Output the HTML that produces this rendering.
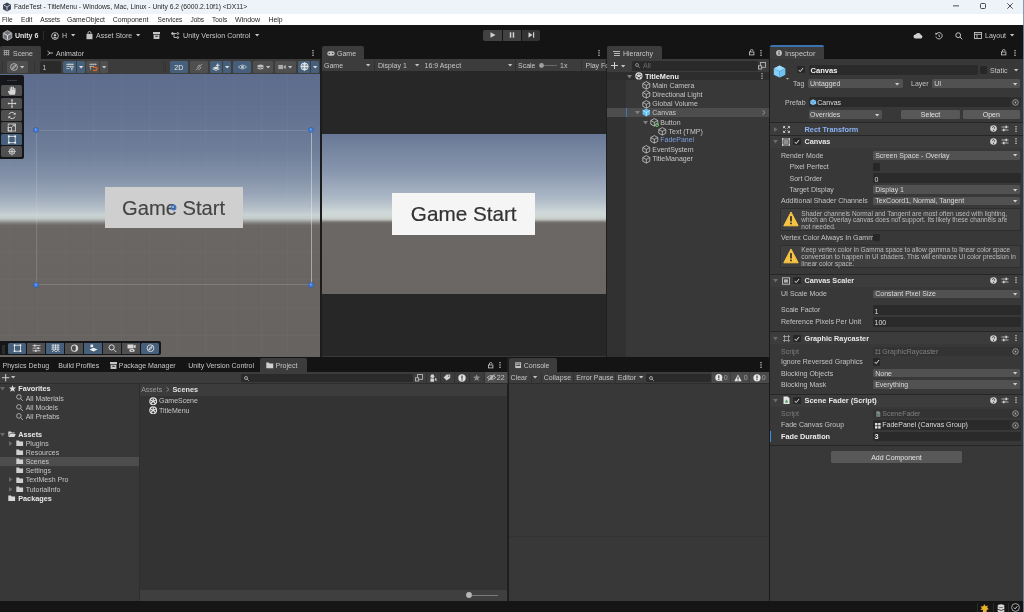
<!DOCTYPE html>
<html lang="en"><head><meta charset="utf-8"><title>Unity Editor - FadeTest</title><style>
html,body{margin:0;padding:0;}
body{width:1024px;height:612px;overflow:hidden;background:#383838;position:relative;font-family:"Liberation Sans",sans-serif;}
#app{position:absolute;left:0;top:0;width:1024px;height:612px;overflow:hidden;will-change:transform;}
.r{position:absolute;}
.s{position:absolute;overflow:visible;}
.t{position:absolute;white-space:nowrap;line-height:12px;font-size:7px;}
</style></head>
<body>
<div id="app">
<div class="r " style="left:0px;top:0px;width:1024px;height:14px;background:#eef3f9;"></div>
<div class="r " style="left:0px;top:14px;width:1024px;height:11px;background:#ffffff;"></div>
<svg class="s" style="left:1.8px;top:1.6px;" width="10" height="10" viewBox="0 0 10 10"><path d="M5 0.5L9 2.7V7.3L5 9.5L1 7.3V2.7Z" fill="#3c4656"/><path d="M5 5V8.6M5 5L1.9 3.2M5 5L8.1 3.2" stroke="#c8d0dc" stroke-width="0.9" fill="none"/></svg>
<div class="t" style="left:14px;top:1px;color:#262626;font-size:6.74px;">FadeTest - TitleMenu - Windows, Mac, Linux - Unity 6.2 (6000.2.10f1) &lt;DX11&gt;</div>
<svg class="s" style="left:953.3px;top:5px;" width="6" height="2" viewBox="0 0 6 2"><rect x="0" y="0.5" width="6" height="0.8" fill="#222"/></svg>
<svg class="s" style="left:980.2px;top:2.8px;" width="6" height="6" viewBox="0 0 6 6"><rect x="0.5" y="0.5" width="5" height="5" rx="1" fill="none" stroke="#222" stroke-width="0.8"/></svg>
<svg class="s" style="left:1006.7px;top:2.6px;" width="6" height="6" viewBox="0 0 6 6"><path d="M0.3 0.3L5.7 5.7M5.7 0.3L0.3 5.7" stroke="#222" stroke-width="0.8"/></svg>
<div class="t" style="left:2px;top:14px;color:#1f1f1f;font-size:6.6px;">File</div>
<div class="t" style="left:21px;top:14px;color:#1f1f1f;font-size:6.6px;">Edit</div>
<div class="t" style="left:40.3px;top:14px;color:#1f1f1f;font-size:6.6px;">Assets</div>
<div class="t" style="left:67px;top:14px;color:#1f1f1f;font-size:6.75px;">GameObject</div>
<div class="t" style="left:112.8px;top:14px;color:#1f1f1f;font-size:6.9px;">Component</div>
<div class="t" style="left:157.6px;top:14px;color:#1f1f1f;font-size:6.45px;">Services</div>
<div class="t" style="left:190.4px;top:14px;color:#1f1f1f;font-size:6.5px;">Jobs</div>
<div class="t" style="left:212px;top:14px;color:#1f1f1f;font-size:6.5px;">Tools</div>
<div class="t" style="left:235px;top:14px;color:#1f1f1f;font-size:7.05px;">Window</div>
<div class="t" style="left:268.5px;top:14px;color:#1f1f1f;font-size:6.85px;">Help</div>
<div class="r " style="left:0px;top:25px;width:1024px;height:34px;background:#141414;"></div>
<svg class="s" style="left:2.3px;top:30.2px;" width="11" height="11" viewBox="0 0 11 11"><path d="M5.5 0.6L9.8 3V8L5.5 10.4L1.2 8V3Z" fill="#6e7076" stroke="#c4c6cc" stroke-width="0.8"/><path d="M5.5 5.5V9.6M5.5 5.5L2 3.5M5.5 5.5L9 3.5" stroke="#e0e0e4" stroke-width="0.9" fill="none"/></svg>
<div class="t" style="left:15px;top:30px;color:#e4e4e4;font-weight:bold;">Unity 6</div>
<div class="r " style="left:43px;top:31px;width:1px;height:9px;background:#2c2c2c;"></div>
<svg class="s" style="left:51px;top:31.5px;" width="8" height="8" viewBox="0 0 8 8"><circle cx="4" cy="4" r="3.4" fill="none" stroke="#c4c4c4" stroke-width="0.9"/><circle cx="4" cy="3.2" r="1.2" fill="#c4c4c4"/><path d="M1.8 6.3a2.4 2 0 0 1 4.4 0" fill="#c4c4c4"/></svg>
<div class="t" style="left:62px;top:30px;color:#c6c6c6;">H</div>
<svg class="s" style="left:70.85px;top:34.400000000000006px;" width="4.3" height="2.6" viewBox="0 0 4.3 2.6"><path d="M0 0H4.3L2.15 2.6Z" fill="#c4c4c4"/></svg>
<svg class="s" style="left:86px;top:31px;" width="7" height="8.5" viewBox="0 0 7 8.5"><path d="M0.5 3H6.5V8.2H0.5Z" fill="#c4c4c4"/><path d="M2 3V2a1.5 1.5 0 0 1 3 0V3" fill="none" stroke="#c4c4c4" stroke-width="0.9"/></svg>
<div class="t" style="left:96px;top:30px;color:#c6c6c6;">Asset Store</div>
<svg class="s" style="left:136.35px;top:34.400000000000006px;" width="4.3" height="2.6" viewBox="0 0 4.3 2.6"><path d="M0 0H4.3L2.15 2.6Z" fill="#c4c4c4"/></svg>
<svg class="s" style="left:153px;top:32px;" width="7" height="7" viewBox="0 0 7 7"><rect x="0" y="0" width="7" height="2.2" fill="#c4c4c4"/><path d="M0.6 2.8H6.4V7H0.6Z" fill="#c4c4c4"/><rect x="2.3" y="3.8" width="2.4" height="0.9" fill="#111"/></svg>
<svg class="s" style="left:171px;top:32px;" width="9" height="7" viewBox="0 0 9 7"><g fill="none" stroke="#c4c4c4" stroke-width="0.9"><path d="M1.5 1.5H5.5M3 1.5V5.5H6"/><circle cx="1.5" cy="1.5" r="0.9" fill="#c4c4c4"/><circle cx="6.8" cy="1.5" r="0.9"/><circle cx="6.8" cy="5.5" r="0.9"/></g></svg>
<div class="t" style="left:183px;top:30px;color:#c6c6c6;font-size:7.17px;">Unity Version Control</div>
<svg class="s" style="left:255.35px;top:34.400000000000006px;" width="4.3" height="2.6" viewBox="0 0 4.3 2.6"><path d="M0 0H4.3L2.15 2.6Z" fill="#c4c4c4"/></svg>
<div class="r " style="left:483.4px;top:29.7px;width:18.2px;height:11px;background:#414141;border-radius:2px 0 0 2px"></div>
<div class="r " style="left:502.8px;top:29.7px;width:18.4px;height:11px;background:#414141;"></div>
<div class="r " style="left:522.4px;top:29.7px;width:18px;height:11px;background:#333333;border-radius:0 2px 2px 0"></div>
<svg class="s" style="left:489.6px;top:32.1px;" width="6" height="6" viewBox="0 0 6 6"><path d="M0.5 0.3L5.5 3L0.5 5.7Z" fill="#d0d0d0"/></svg>
<svg class="s" style="left:509px;top:32.1px;" width="6" height="6" viewBox="0 0 6 6"><rect x="0.8" y="0.3" width="1.5" height="5.4" fill="#d0d0d0"/><rect x="3.7" y="0.3" width="1.5" height="5.4" fill="#d0d0d0"/></svg>
<svg class="s" style="left:528px;top:32.1px;" width="7" height="6" viewBox="0 0 7 6"><path d="M0.5 0.3L4.5 3L0.5 5.7Z" fill="#d0d0d0"/><rect x="5" y="0.3" width="1.2" height="5.4" fill="#d0d0d0"/></svg>
<svg class="s" style="left:913px;top:32px;" width="10" height="7" viewBox="0 0 10 7"><path d="M2.5 6.5a2 2 0 0 1 0-4a3 3 0 0 1 5.5 0.5a1.8 1.8 0 0 1 0 3.5Z" fill="#d0d0d0"/></svg>
<svg class="s" style="left:935px;top:31.5px;" width="8" height="8" viewBox="0 0 8 8"><g fill="none" stroke="#c4c4c4" stroke-width="0.9"><path d="M1.2 2.2A3.2 3.2 0 1 1 0.9 4.6"/><path d="M4 2.3V4.2L5.3 5"/></g><path d="M0.2 0.8L2.8 1.2L0.8 3.2Z" fill="#c4c4c4"/></svg>
<svg class="s" style="left:955px;top:31.5px;" width="8" height="8" viewBox="0 0 8 8"><g fill="none" stroke="#c4c4c4" stroke-width="1"><circle cx="3.2" cy="3.2" r="2.4"/><path d="M5 5L7.3 7.3"/></g></svg>
<svg class="s" style="left:974px;top:32px;" width="8" height="7" viewBox="0 0 8 7"><g fill="none" stroke="#c4c4c4" stroke-width="0.9"><rect x="0.5" y="0.5" width="7" height="6"/><path d="M0.5 2.3H7.5M3 2.3V6.5"/></g></svg>
<div class="t" style="left:985px;top:30px;color:#c6c6c6;">Layout</div>
<svg class="s" style="left:1010.35px;top:34.400000000000006px;" width="4.3" height="2.6" viewBox="0 0 4.3 2.6"><path d="M0 0H4.3L2.15 2.6Z" fill="#c4c4c4"/></svg>
<div class="r " style="left:0px;top:59px;width:320px;height:15px;background:#3c3c3c;"></div>
<div class="r " style="left:320px;top:59px;width:2px;height:298px;background:#1c1c1c;"></div>
<div class="r " style="left:322px;top:59px;width:284px;height:12.3px;background:#3c3c3c;"></div>
<div class="r " style="left:322px;top:71.3px;width:284px;height:285.2px;background:#272727;"></div>
<div class="r " style="left:606px;top:59px;width:1.3px;height:298px;background:#1e1e1e;"></div>
<div class="r " style="left:607px;top:59px;width:161.7px;height:298px;background:#383838;"></div>
<div class="r " style="left:607px;top:59px;width:161.7px;height:12.7px;background:#3c3c3c;"></div>
<div class="r " style="left:768.7px;top:46px;width:1.2px;height:555px;background:#1a1a1a;"></div>
<div class="r " style="left:769.9px;top:59px;width:254.1px;height:542px;background:#383838;"></div>
<div class="r " style="left:0px;top:356.5px;width:769px;height:15.5px;background:#141414;"></div>
<div class="r " style="left:0px;top:372px;width:508px;height:229px;background:#383838;"></div>
<div class="r " style="left:507.3px;top:356.5px;width:1.4px;height:245px;background:#1e1e1e;"></div>
<div class="r " style="left:508.7px;top:372px;width:260px;height:229px;background:#383838;"></div>
<div class="r " style="left:0px;top:601px;width:1024px;height:11px;background:#151515;"></div>
<div class="r " style="left:0px;top:45.5px;width:40.5px;height:13.5px;background:#3c3c3c;border-radius:2px 2px 0 0"></div>
<svg class="s" style="left:3px;top:50px;" width="7" height="6" viewBox="0 0 7 6"><g fill="#a4a4a4"><rect x="0.4" y="0.1" width="6" height="0.8"/><rect x="0.4" y="2.1" width="6" height="0.8"/><rect x="0.4" y="4.1" width="6" height="0.8"/><rect x="1.1" y="0" width="0.8" height="5.6"/><rect x="3.1" y="0" width="0.8" height="5.6"/><rect x="5.1" y="0" width="0.8" height="5.6"/></g></svg>
<div class="t" style="left:13px;top:48px;color:#c6c6c6;">Scene</div>
<svg class="s" style="left:47px;top:50px;" width="6" height="6" viewBox="0 0 6 6"><g stroke="#c4c4c4" stroke-width="0.9" fill="none"><path d="M0.5 1L3 3L0.5 5M3 3H6"/></g></svg>
<div class="t" style="left:56px;top:48px;color:#c6c6c6;">Animator</div>
<svg class="s" style="left:311.7px;top:49.5px;" width="2" height="6" viewBox="0 0 2 6"><g fill="#c4c4c4"><rect x="0.35" y="0" width="1.3" height="1.3"/><rect x="0.35" y="2.35" width="1.3" height="1.3"/><rect x="0.35" y="4.7" width="1.3" height="1.3"/></g></svg>
<div class="r " style="left:322px;top:45.5px;width:42px;height:13.5px;background:#3c3c3c;border-radius:2px 2px 0 0"></div>
<svg class="s" style="left:327px;top:50.5px;" width="8" height="5" viewBox="0 0 8 5"><rect x="0.3" y="0.3" width="7.4" height="4.4" rx="2.2" fill="#c4c4c4"/><circle cx="2.3" cy="2.5" r="0.8" fill="#3c3c3c"/><circle cx="5.7" cy="2.5" r="0.8" fill="#3c3c3c"/></svg>
<div class="t" style="left:337px;top:48px;color:#c6c6c6;">Game</div>
<svg class="s" style="left:597.5px;top:49.5px;" width="2" height="6" viewBox="0 0 2 6"><g fill="#c4c4c4"><rect x="0.35" y="0" width="1.3" height="1.3"/><rect x="0.35" y="2.35" width="1.3" height="1.3"/><rect x="0.35" y="4.7" width="1.3" height="1.3"/></g></svg>
<div class="r " style="left:607px;top:45.5px;width:55px;height:13.5px;background:#3c3c3c;border-radius:2px 2px 0 0"></div>
<svg class="s" style="left:613px;top:50.5px;" width="7" height="5" viewBox="0 0 7 5"><g fill="#c4c4c4"><rect x="0" y="0" width="7" height="0.9"/><rect x="1" y="2" width="6" height="0.9"/><rect x="1" y="4" width="6" height="0.9"/></g></svg>
<div class="t" style="left:623px;top:48px;color:#c6c6c6;">Hierarchy</div>
<svg class="s" style="left:748.8px;top:49.199999999999996px;" width="5.4" height="6.4" viewBox="0 0 5.4 6.4"><g fill="none" stroke="#c4c4c4" stroke-width="0.85"><rect x="0.5" y="3" width="4.4" height="2.9"/><path d="M1.4 3V1.9a1.35 1.35 0 0 1 2.7 0"/></g></svg>
<svg class="s" style="left:760.1px;top:49.5px;" width="2" height="6" viewBox="0 0 2 6"><g fill="#c4c4c4"><rect x="0.35" y="0" width="1.3" height="1.3"/><rect x="0.35" y="2.35" width="1.3" height="1.3"/><rect x="0.35" y="4.7" width="1.3" height="1.3"/></g></svg>
<div class="r " style="left:769.9px;top:45.5px;width:54.2px;height:13.5px;background:#3c3c3c;border-radius:2px 2px 0 0"></div>
<div class="r " style="left:769.9px;top:45.4px;width:54.2px;height:1.4px;background:#3d72b0;border-radius:2px 2px 0 0"></div>
<svg class="s" style="left:776px;top:50px;" width="6" height="6" viewBox="0 0 6 6"><circle cx="3" cy="3" r="2.9" fill="#c4c4c4"/><rect x="2.5" y="2.6" width="1" height="2.2" fill="#3c3c3c"/><rect x="2.5" y="1.2" width="1" height="1" fill="#3c3c3c"/></svg>
<div class="t" style="left:785px;top:48px;color:#c6c6c6;font-size:7.4px;">Inspector</div>
<svg class="s" style="left:1001.3px;top:49.199999999999996px;" width="5.4" height="6.4" viewBox="0 0 5.4 6.4"><g fill="none" stroke="#c4c4c4" stroke-width="0.85"><rect x="0.5" y="3" width="4.4" height="2.9"/><path d="M1.4 3V1.9a1.35 1.35 0 0 1 2.7 0"/></g></svg>
<svg class="s" style="left:1014px;top:49.5px;" width="2" height="6" viewBox="0 0 2 6"><g fill="#c4c4c4"><rect x="0.35" y="0" width="1.3" height="1.3"/><rect x="0.35" y="2.35" width="1.3" height="1.3"/><rect x="0.35" y="4.7" width="1.3" height="1.3"/></g></svg>
<div class="r " style="left:2px;top:61px;width:1px;height:11px;background:#343434;"></div>
<div class="r " style="left:7px;top:60.5px;width:21px;height:12px;background:#4f4f4f;border-radius:1.5px"></div>
<svg class="s" style="left:10px;top:62.5px;" width="8" height="8" viewBox="0 0 8 8"><g fill="none" stroke="#c8c8c8" stroke-width="0.8"><circle cx="4" cy="4" r="3.4"/><path d="M5.8 2.2L3.2 3.4L2.4 5.8L4.8 4.6Z"/></g></svg>
<svg class="s" style="left:20.35px;top:65.5px;" width="4.3" height="2.6" viewBox="0 0 4.3 2.6"><path d="M0 0H4.3L2.15 2.6Z" fill="#c4c4c4"/></svg>
<div class="r " style="left:33.6px;top:61px;width:1px;height:11px;background:#343434;"></div>
<div class="r " style="left:40px;top:60.5px;width:21px;height:12px;background:#2a2a2a;border-radius:1.5px"></div>
<div class="t" style="left:42.5px;top:62px;color:#c6c6c6;">1</div>
<div class="r " style="left:63.3px;top:60.5px;width:13.2px;height:12px;background:#46607c;border-radius:1.5px 0 0 1.5px"></div>
<div class="r " style="left:77px;top:60.5px;width:8px;height:12px;background:#46607c;border-radius:0 1.5px 1.5px 0"></div>
<svg class="s" style="left:66px;top:63px;" width="8" height="7.5" viewBox="0 0 8 7.5"><g stroke="#dcdcdc" stroke-width="0.75" fill="none"><path d="M0.3 1.4H7.7M0.3 3.5H7.7M0.3 5.6H3.6M2.2 0.4V2.4M4.2 0.4V2.4M6.2 0.4V2.4"/><path d="M4.4 4L5.9 5.7V7.4M7.5 4L5.9 5.7" stroke-width="0.95"/></g></svg>
<svg class="s" style="left:78.85px;top:65.5px;" width="4.3" height="2.6" viewBox="0 0 4.3 2.6"><path d="M0 0H4.3L2.15 2.6Z" fill="#e0e0e0"/></svg>
<div class="r " style="left:86.2px;top:60.5px;width:13.2px;height:12px;background:#4f4f4f;border-radius:1.5px 0 0 1.5px"></div>
<div class="r " style="left:99.9px;top:60.5px;width:7.7px;height:12px;background:#4f4f4f;border-radius:0 1.5px 1.5px 0"></div>
<svg class="s" style="left:89px;top:63px;" width="9" height="7.8" viewBox="0 0 9 7.8"><g stroke="#cccccc" stroke-width="0.7" fill="none"><path d="M0.3 1.4H7.7M0.3 3.5H5M2.2 0.4V2.4M4.2 0.4V2.4M6.2 0.4V2.4M1.6 3.5V6.8"/></g><path d="M4 4.4H6.6a1.5 1.5 0 0 1 0 3H4" fill="none" stroke="#e8662a" stroke-width="1.2"/></svg>
<svg class="s" style="left:101.64999999999999px;top:65.5px;" width="4.3" height="2.6" viewBox="0 0 4.3 2.6"><path d="M0 0H4.3L2.15 2.6Z" fill="#c4c4c4"/></svg>
<div class="r " style="left:163px;top:61px;width:1px;height:11px;background:#343434;"></div>
<div class="r " style="left:165px;top:61px;width:1px;height:11px;background:#343434;"></div>
<div class="r " style="left:169.6px;top:60.5px;width:18.4px;height:12px;background:#46607c;border-radius:1.5px"></div>
<div class="t" style="left:169.6px;top:62px;color:#ececec;width:18.4px;text-align:center;">2D</div>
<div class="r " style="left:189.6px;top:60.5px;width:18.6px;height:12px;background:#4f4f4f;border-radius:1.5px"></div>
<svg class="s" style="left:194.5px;top:62.5px;" width="8" height="8" viewBox="0 0 8 8"><g stroke="#b4b4b4" stroke-width="0.8" fill="none"><path d="M1 7.2L7.2 1"/><path d="M2.6 4.6a2 2 0 0 1 2.6-2.2"/><path d="M5.6 3.8a2 2 0 0 1 -2.2 2.6"/></g></svg>
<div class="r " style="left:209.6px;top:60.5px;width:12.7px;height:12px;background:#46607c;border-radius:1.5px 0 0 1.5px"></div>
<div class="r " style="left:222.8px;top:60.5px;width:8.2px;height:12px;background:#46607c;border-radius:0 1.5px 1.5px 0"></div>
<svg class="s" style="left:212px;top:62.5px;" width="8" height="8" viewBox="0 0 8 8"><g fill="#e0e0e0"><path d="M0.5 5L4 3.5L7.5 5L4 6.5Z"/><path d="M0.5 6.3L4 7.8L7.5 6.3V5.6L4 7L0.5 5.6Z"/><path d="M5.2 0.5H6.2V1.8H7.5V2.8H6.2V4H5.2V2.8H4V1.8H5.2Z"/></g></svg>
<svg class="s" style="left:224.75px;top:65.5px;" width="4.3" height="2.6" viewBox="0 0 4.3 2.6"><path d="M0 0H4.3L2.15 2.6Z" fill="#e0e0e0"/></svg>
<div class="r " style="left:232.8px;top:60.5px;width:18.4px;height:12px;background:#46607c;border-radius:1.5px"></div>
<svg class="s" style="left:237.5px;top:63.7px;" width="9" height="6" viewBox="0 0 9 6"><path d="M0.4 3Q4.5 -0.8 8.6 3Q4.5 6.8 0.4 3Z" fill="none" stroke="#c0cad8" stroke-width="0.8"/><circle cx="4.5" cy="3" r="1.3" fill="#c8d0dc"/></svg>
<div class="r " style="left:253px;top:60.5px;width:20.4px;height:12px;background:#4f4f4f;border-radius:1.5px"></div>
<svg class="s" style="left:257px;top:63.8px;" width="7" height="6" viewBox="0 0 7 6"><g fill="#bcbcbc"><ellipse cx="3.5" cy="1.9" rx="3.1" ry="1.5"/><path d="M0.4 3.3Q3.5 5.6 6.6 3.3V4.5Q3.5 6.6 0.4 4.5Z"/></g></svg>
<svg class="s" style="left:265.85px;top:65.5px;" width="4.3" height="2.6" viewBox="0 0 4.3 2.6"><path d="M0 0H4.3L2.15 2.6Z" fill="#c4c4c4"/></svg>
<div class="r " style="left:275px;top:60.5px;width:21.2px;height:12px;background:#4f4f4f;border-radius:1.5px"></div>
<svg class="s" style="left:278.3px;top:63.8px;" width="9" height="6" viewBox="0 0 9 6"><g fill="#aaaaaa"><rect x="0.3" y="0.9" width="4.8" height="4.2"/><path d="M5.7 2.2L7.9 0.9V5.1L5.7 3.8Z"/></g></svg>
<svg class="s" style="left:288.35px;top:65.5px;" width="4.3" height="2.6" viewBox="0 0 4.3 2.6"><path d="M0 0H4.3L2.15 2.6Z" fill="#c4c4c4"/></svg>
<div class="r " style="left:297.6px;top:60.5px;width:12.8px;height:12px;background:#46607c;border-radius:1.5px 0 0 1.5px"></div>
<div class="r " style="left:310.8px;top:60.5px;width:8.2px;height:12px;background:#46607c;border-radius:0 1.5px 1.5px 0"></div>
<svg class="s" style="left:299.5px;top:62px;" width="9" height="9" viewBox="0 0 9 9"><g fill="none" stroke="#ececec" stroke-width="0.9"><circle cx="4.5" cy="4.5" r="3.6"/><path d="M0.9 4.5H8.1M4.5 0.9V8.1"/><ellipse cx="4.5" cy="4.5" rx="1.6" ry="3.6"/></g></svg>
<svg class="s" style="left:312.75px;top:65.5px;" width="4.3" height="2.6" viewBox="0 0 4.3 2.6"><path d="M0 0H4.3L2.15 2.6Z" fill="#e0e0e0"/></svg>
<div class="r" style="left:0;top:74px;width:320px;height:283px;overflow:hidden;background:linear-gradient(to bottom,#5e6d8e 0px,#62718f 37px,#6e7d98 76px,#8290a8 102px,#9aa7b8 121px,#b4bfc8 134px,#c8d2d4 141px,#c2cac8 144.5px,#a0a4a2 147px,#7c7a78 149.5px,#6c6966 151.5px,#6a6663 155px,#676360 283px)">
<div class="r" style="left:8.5px;top:0;width:1px;height:281px;background:rgba(255,255,255,0.025)"></div>
<div class="r" style="left:36.5px;top:0;width:1px;height:281px;background:rgba(255,255,255,0.025)"></div>
<div class="r" style="left:64.5px;top:0;width:1px;height:281px;background:rgba(255,255,255,0.025)"></div>
<div class="r" style="left:92.5px;top:0;width:1px;height:281px;background:rgba(255,255,255,0.025)"></div>
<div class="r" style="left:120.5px;top:0;width:1px;height:281px;background:rgba(255,255,255,0.025)"></div>
<div class="r" style="left:148.5px;top:0;width:1px;height:281px;background:rgba(255,255,255,0.025)"></div>
<div class="r" style="left:176.5px;top:0;width:1px;height:281px;background:rgba(255,255,255,0.025)"></div>
<div class="r" style="left:204.5px;top:0;width:1px;height:281px;background:rgba(255,255,255,0.025)"></div>
<div class="r" style="left:232.5px;top:0;width:1px;height:281px;background:rgba(255,255,255,0.025)"></div>
<div class="r" style="left:260.5px;top:0;width:1px;height:281px;background:rgba(255,255,255,0.025)"></div>
<div class="r" style="left:286.5px;top:0;width:1px;height:281px;background:rgba(255,255,255,0.025)"></div>
<div class="r" style="left:0;top:37px;width:320px;height:1px;background:rgba(255,255,255,0.02)"></div>
<div class="r" style="left:0;top:65px;width:320px;height:1px;background:rgba(255,255,255,0.02)"></div>
<div class="r" style="left:0;top:93px;width:320px;height:1px;background:rgba(255,255,255,0.02)"></div>
<div class="r" style="left:0;top:121px;width:320px;height:1px;background:rgba(255,255,255,0.02)"></div>
<div class="r" style="left:0;top:149px;width:320px;height:1px;background:rgba(255,255,255,0.02)"></div>
<div class="r" style="left:0;top:177px;width:320px;height:1px;background:rgba(255,255,255,0.02)"></div>
<div class="r" style="left:0;top:205px;width:320px;height:1px;background:rgba(255,255,255,0.02)"></div>
<div class="r" style="left:0;top:233px;width:320px;height:1px;background:rgba(255,255,255,0.02)"></div>
<div class="r" style="left:0;top:261px;width:320px;height:1px;background:rgba(255,255,255,0.02)"></div>
</div>
<div class="r " style="left:36px;top:129.8px;width:276px;height:1px;background:rgba(220,220,220,0.16);"></div>
<div class="r " style="left:36px;top:284.2px;width:276px;height:1px;background:rgba(220,220,220,0.22);"></div>
<div class="r " style="left:35.8px;top:130px;width:1px;height:154.5px;background:rgba(220,220,220,0.18);"></div>
<div class="r " style="left:310.8px;top:130px;width:1px;height:154.5px;background:rgba(235,235,235,0.5);"></div>
<div class="r " style="left:104.6px;top:187px;width:138px;height:40.6px;background:#cfcfcf;"></div>
<div class="t" style="left:104.6px;top:202px;color:#454545;font-size:20.15px;width:138px;text-align:center;line-height:24px;top:195.5px;-webkit-text-stroke:0.15px #454545;">Game Start</div>
<svg class="s" style="left:33.2px;top:127.19999999999999px;" width="6" height="6" viewBox="0 0 6 6"><circle cx="3" cy="3" r="2.8" fill="#3a5f9e"/><circle cx="3" cy="3" r="2.2" fill="#3b7be0"/><circle cx="2.8" cy="2.5" r="1" fill="#6ea0f0"/></svg>
<svg class="s" style="left:308.3px;top:127.19999999999999px;" width="6" height="6" viewBox="0 0 6 6"><circle cx="3" cy="3" r="2.8" fill="#3a5f9e"/><circle cx="3" cy="3" r="2.2" fill="#3b7be0"/><circle cx="2.8" cy="2.5" r="1" fill="#6ea0f0"/></svg>
<svg class="s" style="left:33.2px;top:281.8px;" width="6" height="6" viewBox="0 0 6 6"><circle cx="3" cy="3" r="2.8" fill="#3a5f9e"/><circle cx="3" cy="3" r="2.2" fill="#3b7be0"/><circle cx="2.8" cy="2.5" r="1" fill="#6ea0f0"/></svg>
<svg class="s" style="left:308.3px;top:281.8px;" width="6" height="6" viewBox="0 0 6 6"><circle cx="3" cy="3" r="2.8" fill="#3a5f9e"/><circle cx="3" cy="3" r="2.2" fill="#3b7be0"/><circle cx="2.8" cy="2.5" r="1" fill="#6ea0f0"/></svg>
<svg class="s" style="left:169.8px;top:203.8px;" width="7" height="7" viewBox="0 0 7 7"><circle cx="3.5" cy="3.5" r="2.3" fill="rgba(90,120,170,0.45)" stroke="#3a78d8" stroke-width="1.3"/><circle cx="3.1" cy="3.1" r="0.7" fill="#c8dcf8"/></svg>
<div class="r " style="left:0px;top:75.4px;width:24px;height:83.5px;background:#14161a;border-radius:0 2px 2px 0"></div>
<div class="r " style="left:7px;top:79.6px;width:10px;height:1.4px;background:#34383e;"></div>
<div class="r " style="left:1px;top:85px;width:21px;height:11.2px;background:#4f4f4f;border-radius:1.5px"></div>
<div class="r " style="left:1px;top:97.6px;width:21px;height:11.2px;background:#4f4f4f;border-radius:1.5px"></div>
<div class="r " style="left:1px;top:109.7px;width:21px;height:11.2px;background:#4f4f4f;border-radius:1.5px"></div>
<div class="r " style="left:1px;top:121.9px;width:21px;height:11.2px;background:#4f4f4f;border-radius:1.5px"></div>
<div class="r " style="left:1px;top:133.9px;width:21px;height:11.2px;background:#46607c;border-radius:1.5px"></div>
<div class="r " style="left:1px;top:146px;width:21px;height:11.2px;background:#4f4f4f;border-radius:1.5px"></div>
<svg class="s" style="left:7px;top:86px;" width="10" height="9" viewBox="0 0 10 9"><path d="M2.6 8.8L0.8 5.4L1.7 4.7L2.7 5.6V1.5Q3.2 1 3.7 1.5V3.8H4.1V0.7Q4.7 0.2 5.3 0.7V3.8H5.7V1.1Q6.3 0.6 6.9 1.1V4H7.3V2.2Q7.9 1.8 8.5 2.3V6.4L7.8 8.8Z" fill="#d8d8d8"/></svg>
<svg class="s" style="left:7px;top:98.7px;" width="10" height="9" viewBox="0 0 10 9"><g stroke="#d8d8d8" stroke-width="0.9" fill="none"><path d="M5 0.8V8.2M1.3 4.5H8.7"/></g><g fill="#d8d8d8"><path d="M5 0L6.3 1.6H3.7Z"/><path d="M5 9L6.3 7.4H3.7Z"/><path d="M0.5 4.5L2.1 3.2V5.8Z"/><path d="M9.5 4.5L7.9 3.2V5.8Z"/></g></svg>
<svg class="s" style="left:7px;top:110.8px;" width="10" height="9" viewBox="0 0 10 9"><g stroke="#d8d8d8" stroke-width="0.9" fill="none"><path d="M7.8 3A3.2 3.2 0 0 0 2 3.4"/><path d="M2.2 6A3.2 3.2 0 0 0 8 5.6"/></g><g fill="#d8d8d8"><path d="M8.6 1.4V3.8H6.2Z"/><path d="M1.4 7.6V5.2H3.8Z"/></g></svg>
<svg class="s" style="left:7px;top:122.9px;" width="10" height="9" viewBox="0 0 10 9"><g stroke="#d8d8d8" stroke-width="0.8" fill="none"><rect x="1.2" y="1" width="7.4" height="7"/><rect x="1.2" y="4.6" width="3.4" height="3.4"/><path d="M4.8 4.4L7.4 1.8M5.6 1.8H7.4V3.6"/></g></svg>
<svg class="s" style="left:7px;top:135px;" width="10" height="9" viewBox="0 0 10 9"><rect x="1.8" y="1.3" width="6.4" height="6.4" fill="none" stroke="#f0f0f0" stroke-width="0.8"/><g fill="#f0f0f0"><rect x="0.9" y="0.4" width="1.8" height="1.8"/><rect x="7.3" y="0.4" width="1.8" height="1.8"/><rect x="0.9" y="6.8" width="1.8" height="1.8"/><rect x="7.3" y="6.8" width="1.8" height="1.8"/></g></svg>
<svg class="s" style="left:7px;top:147.1px;" width="10" height="9" viewBox="0 0 10 9"><g stroke="#d8d8d8" stroke-width="0.7" fill="none"><circle cx="5" cy="4.5" r="2.8"/><path d="M5 0.6V8.4M1.1 4.5H8.9M2.4 1.9L7.6 7.1M7.6 1.9L2.4 7.1"/></g></svg>
<div class="r " style="left:0px;top:341.2px;width:160.5px;height:14.3px;background:#14161a;border-radius:0 2px 2px 0"></div>
<div class="r " style="left:2px;top:344.5px;width:3px;height:9px;background:#2c2c2c;"></div>
<div class="r " style="left:8.2px;top:342.9px;width:18.2px;height:11px;background:#46607c;border-radius:1.5px"></div>
<div class="r " style="left:27.2px;top:342.9px;width:18.2px;height:11px;background:#4f4f4f;"></div>
<div class="r " style="left:46.2px;top:342.9px;width:18.2px;height:11px;background:#46607c;"></div>
<div class="r " style="left:65.2px;top:342.9px;width:18.2px;height:11px;background:#4f4f4f;"></div>
<div class="r " style="left:84.2px;top:342.9px;width:18.2px;height:11px;background:#46607c;"></div>
<div class="r " style="left:103.2px;top:342.9px;width:18.2px;height:11px;background:#4f4f4f;"></div>
<div class="r " style="left:122.2px;top:342.9px;width:18.2px;height:11px;background:#4f4f4f;"></div>
<div class="r " style="left:141.2px;top:342.9px;width:18.2px;height:11px;background:#46607c;border-radius:1.5px"></div>
<svg class="s" style="left:13px;top:344.3px;" width="9" height="8.4" viewBox="0 0 9 8.4"><rect x="1.5" y="1.2" width="6" height="6" fill="none" stroke="#f0f0f0" stroke-width="0.8"/><g fill="#f0f0f0"><rect x="0.7" y="0.4" width="1.6" height="1.6"/><rect x="6.7" y="0.4" width="1.6" height="1.6"/><rect x="0.7" y="6.4" width="1.6" height="1.6"/><rect x="6.7" y="6.4" width="1.6" height="1.6"/></g></svg>
<svg class="s" style="left:32px;top:344.3px;" width="9" height="8.4" viewBox="0 0 9 8.4"><g stroke="#d8d8d8" stroke-width="0.8" fill="none"><path d="M0.5 1.6H8.5M0.5 4.2H8.5M0.5 6.8H8.5"/></g><g fill="#d8d8d8"><rect x="2" y="0.6" width="1.6" height="2"/><rect x="5.4" y="3.2" width="1.6" height="2"/><rect x="3" y="5.8" width="1.6" height="2"/></g></svg>
<svg class="s" style="left:51px;top:344.3px;" width="9" height="8.4" viewBox="0 0 9 8.4"><g stroke="#f0f0f0" stroke-width="0.7" fill="none"><path d="M0.5 1.2H8.5M0.5 3.2H8.5M0.5 5.2H8.5M2 0.3V6M4.5 0.3V6M7 0.3V6M1 8L3 6.2L5 8L7 6.2L8.5 8"/></g></svg>
<svg class="s" style="left:70px;top:344.3px;" width="9" height="8.4" viewBox="0 0 9 8.4"><circle cx="4.5" cy="4.2" r="3.3" fill="none" stroke="#d8d8d8" stroke-width="1"/><path d="M4.5 0.9A3.3 3.3 0 0 1 4.5 7.5A4.5 4.5 0 0 0 4.5 0.9Z" fill="#d8d8d8"/></svg>
<svg class="s" style="left:89px;top:344.3px;" width="9" height="8.4" viewBox="0 0 9 8.4"><g fill="#f0f0f0"><path d="M0.5 5.6L4.5 3.8L8.5 5.6L4.5 7.6Z"/><rect x="1.5" y="0.6" width="2.6" height="2.6"/></g></svg>
<svg class="s" style="left:108px;top:344.3px;" width="9" height="8.4" viewBox="0 0 9 8.4"><g fill="none" stroke="#d8d8d8" stroke-width="1"><circle cx="3.6" cy="3.4" r="2.6"/><path d="M5.6 5.4L8.2 8"/></g></svg>
<svg class="s" style="left:127px;top:344.3px;" width="9" height="8.4" viewBox="0 0 9 8.4"><g fill="#d8d8d8"><rect x="0.5" y="0.5" width="6" height="4"/><path d="M6.8 1.5L8.6 0.7V4.3L6.8 3.5Z"/><ellipse cx="5" cy="6.6" rx="2.8" ry="1.5"/></g><circle cx="5" cy="6.6" r="0.8" fill="#4f4f4f"/></svg>
<svg class="s" style="left:146px;top:344.3px;" width="9" height="8.4" viewBox="0 0 9 8.4"><g fill="none" stroke="#f0f0f0" stroke-width="0.8"><circle cx="4.5" cy="4.2" r="3.4"/><path d="M6.2 2.4L3.8 3.6L2.8 6L5.2 4.8Z"/></g></svg>
<div class="t" style="left:324px;top:60px;color:#c6c6c6;">Game</div>
<svg class="s" style="left:366.15000000000003px;top:64.3px;" width="4.3" height="2.6" viewBox="0 0 4.3 2.6"><path d="M0 0H4.3L2.15 2.6Z" fill="#c4c4c4"/></svg>
<div class="r " style="left:374px;top:59.5px;width:1px;height:11.5px;background:#303030;"></div>
<div class="t" style="left:378px;top:60px;color:#c6c6c6;">Display 1</div>
<svg class="s" style="left:415.35px;top:64.3px;" width="4.3" height="2.6" viewBox="0 0 4.3 2.6"><path d="M0 0H4.3L2.15 2.6Z" fill="#c4c4c4"/></svg>
<div class="t" style="left:424.5px;top:60px;color:#c6c6c6;">16:9 Aspect</div>
<svg class="s" style="left:507.85px;top:64.3px;" width="4.3" height="2.6" viewBox="0 0 4.3 2.6"><path d="M0 0H4.3L2.15 2.6Z" fill="#c4c4c4"/></svg>
<div class="r " style="left:514.5px;top:59.5px;width:1px;height:11.5px;background:#303030;"></div>
<div class="t" style="left:518px;top:60px;color:#c6c6c6;">Scale</div>
<div class="r " style="left:541px;top:65.1px;width:16px;height:0.8px;background:#6a6a6a;"></div>
<svg class="s" style="left:538.5px;top:63px;" width="5" height="5" viewBox="0 0 5 5"><circle cx="2.5" cy="2.5" r="2.4" fill="#a0a0a0"/></svg>
<div class="t" style="left:560px;top:60px;color:#c6c6c6;">1x</div>
<div class="r " style="left:581px;top:59.5px;width:1px;height:11.5px;background:#303030;"></div>
<div class="t" style="left:585.5px;top:60px;color:#c6c6c6;width:21px;overflow:hidden;white-space:nowrap;">Play Focused</div>
<div class="r" style="left:322px;top:133.6px;width:284px;height:160.8px;background:linear-gradient(to bottom,#687896 0px,#77869f 16px,#8593ab 35px,#a0adbf 55px,#aab7c5 63px,#b8c3cc 69.5px,#c9d3d6 76px,#d0d8d8 80px,#cdd4d2 83px,#c2c8c2 85.2px,#9c9e9b 86.8px,#74716e 88.2px,#6b6764 90px,#6a6663 160px)"></div>
<div class="r " style="left:392.2px;top:193px;width:143.1px;height:41.8px;background:#f5f5f5;"></div>
<div class="t" style="left:392.2px;top:209px;color:#333333;font-size:20.7px;width:143.1px;text-align:center;line-height:24px;top:202px;-webkit-text-stroke:0.2px #333333;">Game Start</div>
<div class="r " style="left:607px;top:72px;width:18.7px;height:284.5px;background:#313131;"></div>
<div class="r " style="left:607px;top:71.6px;width:161.7px;height:8.5px;background:#2d2d2d;"></div>
<svg class="s" style="left:611px;top:61.7px;" width="7" height="7" viewBox="0 0 7 7"><path d="M3.5 0V7M0 3.5H7" stroke="#d0d0d0" stroke-width="1"/></svg>
<svg class="s" style="left:620.85px;top:64.5px;" width="4.3" height="2.6" viewBox="0 0 4.3 2.6"><path d="M0 0H4.3L2.15 2.6Z" fill="#c4c4c4"/></svg>
<div class="r " style="left:632px;top:60.5px;width:126px;height:10px;background:#2a2a2a;border-radius:1.5px"></div>
<svg class="s" style="left:635px;top:63.3px;" width="5" height="5" viewBox="0 0 5 5"><g fill="none" stroke="#9a9a9a" stroke-width="0.8"><circle cx="2" cy="2" r="1.5"/><path d="M3.2 3.2L4.8 4.8"/></g></svg>
<div class="t" style="left:643px;top:60px;color:#6e6e6e;">All</div>
<svg class="s" style="left:758px;top:61.5px;" width="8" height="8" viewBox="0 0 8 8"><g fill="none" stroke="#c4c4c4" stroke-width="0.8"><rect x="2.6" y="0.5" width="4.8" height="4.8"/><rect x="0.5" y="3.8" width="3.2" height="3.2" fill="#3c3c3c"/></g></svg>
<div class="r " style="left:607px;top:108.2px;width:161.7px;height:9px;background:#4d4d4d;"></div>
<div class="r " style="left:626px;top:108.2px;width:1px;height:9px;background:#3a79bb;"></div>
<svg class="s" style="left:627.0px;top:74.6px;" width="5" height="3.5" viewBox="0 0 5 3.5"><path d="M0 0H5L2.5 3.5Z" fill="#808080"/></svg>
<svg class="s" style="left:635px;top:72.19999999999999px;" width="7.8" height="7.8" viewBox="0 0 8.4 8.4"><circle cx="4.2" cy="4.2" r="3.9" fill="#e0e0e0"/><g fill="#2b2b2b"><path d="M3.6 3.5L1.9 2.6L3.6 1.3Z"/><path d="M4.8 3.5L6.5 2.6L4.8 1.3Z"/><path d="M1.3 3.6L3 4.5L1.6 6Z"/><path d="M7.1 3.6L5.4 4.5L6.8 6Z"/><path d="M4.2 5.2L5.8 6.3L4.2 7.4L2.6 6.3Z"/></g></svg>
<div class="t" style="left:645px;top:71px;color:#eeeeee;font-size:7.3px;font-weight:bold;">TitleMenu</div>
<svg class="s" style="left:760.5px;top:73.1px;" width="2" height="6" viewBox="0 0 2 6"><g fill="#b0b0b0"><rect x="0.35" y="0" width="1.3" height="1.3"/><rect x="0.35" y="2.35" width="1.3" height="1.3"/><rect x="0.35" y="4.7" width="1.3" height="1.3"/></g></svg>
<svg class="s" style="left:641.7px;top:81.2px;" width="8.6" height="8.6" viewBox="0 0 8.6 8.6"><g fill="none" stroke="#c8c8c8" stroke-width="0.8"><path d="M4.3 0.6L7.8 2.5V6.3L4.3 8.1L0.8 6.3V2.5Z"/><path d="M4.3 4.4V8.1M4.3 4.4L0.8 2.5M4.3 4.4L7.8 2.5"/></g></svg>
<div class="t" style="left:652.3px;top:80px;color:#c6c6c6;">Main Camera</div>
<svg class="s" style="left:641.7px;top:90.2px;" width="8.6" height="8.6" viewBox="0 0 8.6 8.6"><g fill="none" stroke="#c8c8c8" stroke-width="0.8"><path d="M4.3 0.6L7.8 2.5V6.3L4.3 8.1L0.8 6.3V2.5Z"/><path d="M4.3 4.4V8.1M4.3 4.4L0.8 2.5M4.3 4.4L7.8 2.5"/></g></svg>
<div class="t" style="left:652.3px;top:89px;color:#c6c6c6;">Directional Light</div>
<svg class="s" style="left:641.7px;top:99.5px;" width="8.6" height="8.6" viewBox="0 0 8.6 8.6"><g fill="none" stroke="#c8c8c8" stroke-width="0.8"><path d="M4.3 0.6L7.8 2.5V6.3L4.3 8.1L0.8 6.3V2.5Z"/><path d="M4.3 4.4V8.1M4.3 4.4L0.8 2.5M4.3 4.4L7.8 2.5"/></g></svg>
<div class="t" style="left:652.3px;top:98px;color:#c6c6c6;">Global Volume</div>
<svg class="s" style="left:635.0px;top:110.9px;" width="5" height="3.5" viewBox="0 0 5 3.5"><path d="M0 0H5L2.5 3.5Z" fill="#808080"/></svg>
<svg class="s" style="left:641.7px;top:108.10000000000001px;" width="8.6" height="8.6" viewBox="0 0 8.6 8.6"><path d="M4.3 0.4L8 2.4V6.4L4.3 8.3L0.6 6.4V2.4Z" fill="#62bcf0"/><path d="M4.3 4.4V8.3M4.3 4.4L0.6 2.4M4.3 4.4L8 2.4" stroke="#d8f2ff" stroke-width="0.7" fill="none"/></svg>
<div class="t" style="left:652.3px;top:107px;color:#c6c6c6;">Canvas</div>
<svg class="s" style="left:762px;top:109.9px;" width="3.5" height="5" viewBox="0 0 3.5 5"><path d="M0.5 0.3L3 2.5L0.5 4.7" fill="none" stroke="#a8a8a8" stroke-width="0.8"/></svg>
<svg class="s" style="left:642.8px;top:120.8px;" width="5" height="3.5" viewBox="0 0 5 3.5"><path d="M0 0H5L2.5 3.5Z" fill="#808080"/></svg>
<svg class="s" style="left:650px;top:118.0px;" width="8.6" height="8.6" viewBox="0 0 8.6 8.6"><g fill="none" stroke="#c8c8c8" stroke-width="0.8"><path d="M4.3 0.6L7.8 2.5V6.3L4.3 8.1L0.8 6.3V2.5Z"/><path d="M4.3 4.4V8.1M4.3 4.4L0.8 2.5M4.3 4.4L7.8 2.5"/></g></svg>
<div class="t" style="left:660.3px;top:117px;color:#c6c6c6;">Button</div>
<svg class="s" style="left:654.5px;top:122.5px;" width="4" height="4" viewBox="0 0 4 4"><circle cx="2" cy="2" r="1.6" fill="none" stroke="#5ec85e" stroke-width="0.9"/></svg>
<svg class="s" style="left:658px;top:127.10000000000001px;" width="8.6" height="8.6" viewBox="0 0 8.6 8.6"><g fill="none" stroke="#c8c8c8" stroke-width="0.8"><path d="M4.3 0.6L7.8 2.5V6.3L4.3 8.1L0.8 6.3V2.5Z"/><path d="M4.3 4.4V8.1M4.3 4.4L0.8 2.5M4.3 4.4L7.8 2.5"/></g></svg>
<div class="t" style="left:668.5px;top:126px;color:#c6c6c6;">Text (TMP)</div>
<svg class="s" style="left:650px;top:135.39999999999998px;" width="8.6" height="8.6" viewBox="0 0 8.6 8.6"><g fill="none" stroke="#c8c8c8" stroke-width="0.8"><path d="M4.3 0.6L7.8 2.5V6.3L4.3 8.1L0.8 6.3V2.5Z"/><path d="M4.3 4.4V8.1M4.3 4.4L0.8 2.5M4.3 4.4L7.8 2.5"/></g></svg>
<div class="t" style="left:660.3px;top:134px;color:#7b9ede;">FadePanel</div>
<svg class="s" style="left:641.7px;top:145.39999999999998px;" width="8.6" height="8.6" viewBox="0 0 8.6 8.6"><g fill="none" stroke="#c8c8c8" stroke-width="0.8"><path d="M4.3 0.6L7.8 2.5V6.3L4.3 8.1L0.8 6.3V2.5Z"/><path d="M4.3 4.4V8.1M4.3 4.4L0.8 2.5M4.3 4.4L7.8 2.5"/></g></svg>
<div class="t" style="left:652.3px;top:144px;color:#c6c6c6;">EventSystem</div>
<svg class="s" style="left:641.7px;top:154.5px;" width="8.6" height="8.6" viewBox="0 0 8.6 8.6"><g fill="none" stroke="#c8c8c8" stroke-width="0.8"><path d="M4.3 0.6L7.8 2.5V6.3L4.3 8.1L0.8 6.3V2.5Z"/><path d="M4.3 4.4V8.1M4.3 4.4L0.8 2.5M4.3 4.4L7.8 2.5"/></g></svg>
<div class="t" style="left:652.3px;top:153px;color:#c6c6c6;">TitleManager</div>
<svg class="s" style="left:773.2px;top:65px;" width="13" height="13" viewBox="0 0 13 13"><path d="M6.5 0.6L12.2 3.5V9.7L6.5 12.6L0.8 9.7V3.5Z" fill="#84d0fb"/><path d="M6.5 6.4L0.8 3.5L6.5 0.6L12.2 3.5Z" fill="#9adbff"/><path d="M6.5 6.4V12.6L12.2 9.7V3.5Z" fill="#6fc2f3"/><path d="M6.5 6.4V12.6M6.5 6.4L0.8 3.5M6.5 6.4L12.2 3.5" stroke="#4a88b8" stroke-width="0.5" fill="none"/></svg>
<svg class="s" style="left:785.995px;top:77.59px;" width="3.01" height="1.8199999999999998" viewBox="0 0 3.01 1.8199999999999998"><path d="M0 0H3.01L1.505 1.8199999999999998Z" fill="#b0b0b0"/></svg>
<div class="r " style="left:797px;top:65.7px;width:7.6px;height:7.6px;background:#272727;border-radius:1px"></div>
<svg class="s" style="left:797px;top:65.7px;" width="7.6" height="7.6" viewBox="0 0 7.6 7.6"><path d="M1.7 3.952L3.1919999999999997 5.624L6.08 1.976" fill="none" stroke="#e0e0e0" stroke-width="1"/></svg>
<div class="r " style="left:808.5px;top:64.8px;width:169px;height:10px;background:#2a2a2a;border-radius:1.5px"></div>
<div class="t" style="left:810.5px;top:65px;color:#f0f0f0;font-size:7.6px;font-weight:bold;">Canvas</div>
<div class="r " style="left:979.5px;top:66px;width:7.6px;height:7.6px;background:#272727;border-radius:1px"></div>
<div class="t" style="left:990px;top:65px;color:#c4c4c4;">Static</div>
<svg class="s" style="left:1014.35px;top:69.2px;" width="4.3" height="2.6" viewBox="0 0 4.3 2.6"><path d="M0 0H4.3L2.15 2.6Z" fill="#c4c4c4"/></svg>
<div class="t" style="left:793px;top:78px;color:#c4c4c4;">Tag</div>
<div class="r " style="left:808px;top:79.2px;width:94.5px;height:8.8px;background:#515151;border-radius:1.5px"></div>
<div class="t" style="left:810px;top:78px;color:#dcdcdc;">Untagged</div>
<svg class="s" style="left:895.15px;top:82.50000000000001px;" width="4.3" height="2.6" viewBox="0 0 4.3 2.6"><path d="M0 0H4.3L2.15 2.6Z" fill="#d0d0d0"/></svg>
<div class="t" style="left:911px;top:78px;color:#c4c4c4;">Layer</div>
<div class="r " style="left:932.2px;top:79.2px;width:88px;height:8.8px;background:#515151;border-radius:1.5px"></div>
<div class="t" style="left:934.2px;top:78px;color:#dcdcdc;">UI</div>
<svg class="s" style="left:1012.85px;top:82.50000000000001px;" width="4.3" height="2.6" viewBox="0 0 4.3 2.6"><path d="M0 0H4.3L2.15 2.6Z" fill="#d0d0d0"/></svg>
<div class="t" style="left:785px;top:97px;color:#c4c4c4;">Prefab</div>
<div class="r " style="left:808.5px;top:97.2px;width:212px;height:9.6px;background:#2a2a2a;border-radius:1.5px"></div>
<div class="t" style="left:817.3px;top:97px;color:#dcdcdc;">Canvas</div>
<svg class="s" style="left:809.7px;top:98.9px;" width="6.4" height="6.4" viewBox="0 0 6.4 6.4"><path d="M3.2 0.2L6.1 1.7V4.7L3.2 6.2L0.3 4.7V1.7Z" fill="#7cc8f6"/><path d="M3.2 3.2V6.2M3.2 3.2L0.3 1.7M3.2 3.2L6.1 1.7" stroke="#3f7fae" stroke-width="0.5" fill="none"/></svg>
<div class="r " style="left:1010px;top:97.2px;width:10.5px;height:9.6px;background:#303030;border-radius:0 1.5px 1.5px 0"></div>
<svg class="s" style="left:1011.8px;top:98.5px;" width="7" height="7" viewBox="0 0 7 7"><circle cx="3.5" cy="3.5" r="2.8" fill="none" stroke="#b0b0b0" stroke-width="0.8"/><circle cx="3.5" cy="3.5" r="0.9" fill="#b0b0b0"/></svg>
<div class="r " style="left:808.5px;top:110.2px;width:73.7px;height:8.8px;background:#515151;border-radius:1.5px"></div>
<div class="t" style="left:810px;top:109px;color:#dcdcdc;">Overrides</div>
<svg class="s" style="left:874.85px;top:113.50000000000001px;" width="4.3" height="2.6" viewBox="0 0 4.3 2.6"><path d="M0 0H4.3L2.15 2.6Z" fill="#d0d0d0"/></svg>
<div class="r " style="left:901.2px;top:110.2px;width:58.8px;height:8.8px;background:#585858;border-radius:1.5px"></div>
<div class="t" style="left:901.2px;top:109px;color:#e4e4e4;width:58.8px;text-align:center;">Select</div>
<div class="r " style="left:963px;top:110.2px;width:56.5px;height:8.8px;background:#585858;border-radius:1.5px"></div>
<div class="t" style="left:963px;top:109px;color:#e4e4e4;width:56.5px;text-align:center;">Open</div>
<div class="r " style="left:769.9px;top:122.3px;width:254.1px;height:12.6px;background:#3c3c3c;"></div>
<div class="r " style="left:769.9px;top:121.5px;width:254.1px;height:0.9px;background:#262626;"></div>
<svg class="s" style="left:774.0px;top:126.5px;" width="3.5" height="5" viewBox="0 0 3.5 5"><path d="M0 0L3.5 2.5L0 5Z" fill="#6a6a6a"/></svg>
<div class="t" style="left:804.5px;top:124px;color:#8ab4f8;font-size:7.35px;font-weight:bold;">Rect Transform</div>
<svg class="s" style="left:989.5px;top:125.1px;" width="7" height="7" viewBox="0 0 7 7"><circle cx="3.5" cy="3.5" r="3.3" fill="#d0d0d0"/><path d="M2.4 2.7a1.1 1.1 0 1 1 1.6 1L3.5 4.2" fill="none" stroke="#3e3e3e" stroke-width="0.9"/><rect x="3" y="4.9" width="1" height="1" fill="#3e3e3e"/></svg>
<svg class="s" style="left:1000.5px;top:125.1px;" width="8" height="7" viewBox="0 0 8 7"><g stroke="#d0d0d0" stroke-width="0.8" fill="none"><path d="M0.5 2H7.5M0.5 5H7.5"/></g><g fill="#d0d0d0"><rect x="4.5" y="0.7" width="1.5" height="2.6"/><rect x="2" y="3.7" width="1.5" height="2.6"/></g></svg>
<svg class="s" style="left:1014.5px;top:125.6px;" width="2" height="6" viewBox="0 0 2 6"><g fill="#d0d0d0"><rect x="0.35" y="0" width="1.3" height="1.3"/><rect x="0.35" y="2.35" width="1.3" height="1.3"/><rect x="0.35" y="4.7" width="1.3" height="1.3"/></g></svg>
<svg class="s" style="left:783px;top:125.6px;" width="7" height="7" viewBox="0 0 7 7"><g fill="none" stroke="#d0d0d0" stroke-width="0.9"><path d="M0.5 2.2V0.5H2.2M4.8 0.5H6.5V2.2M6.5 4.8V6.5H4.8M2.2 6.5H0.5V4.8"/><path d="M0.8 0.8L2.6 2.6M6.2 0.8L4.4 2.6M6.2 6.2L4.4 4.4M0.8 6.2L2.6 4.4"/></g></svg>
<div class="r " style="left:769.9px;top:135.7px;width:254.1px;height:12.4px;background:#3c3c3c;"></div>
<div class="r " style="left:769.9px;top:134.89999999999998px;width:254.1px;height:0.9px;background:#262626;"></div>
<svg class="s" style="left:773.0px;top:140.1px;" width="5" height="3.5" viewBox="0 0 5 3.5"><path d="M0 0H5L2.5 3.5Z" fill="#6a6a6a"/></svg>
<div class="r " style="left:793.3px;top:137.7px;width:7.6px;height:7.6px;background:#272727;border-radius:1px"></div>
<svg class="s" style="left:793.3px;top:137.7px;" width="7.6" height="7.6" viewBox="0 0 7.6 7.6"><path d="M1.7 3.952L3.1919999999999997 5.624L6.08 1.976" fill="none" stroke="#e0e0e0" stroke-width="1"/></svg>
<div class="t" style="left:804.5px;top:136px;color:#e8e8e8;font-size:7.25px;font-weight:bold;">Canvas</div>
<svg class="s" style="left:989.5px;top:137.7px;" width="7" height="7" viewBox="0 0 7 7"><circle cx="3.5" cy="3.5" r="3.3" fill="#d0d0d0"/><path d="M2.4 2.7a1.1 1.1 0 1 1 1.6 1L3.5 4.2" fill="none" stroke="#3e3e3e" stroke-width="0.9"/><rect x="3" y="4.9" width="1" height="1" fill="#3e3e3e"/></svg>
<svg class="s" style="left:1000.5px;top:137.7px;" width="8" height="7" viewBox="0 0 8 7"><g stroke="#d0d0d0" stroke-width="0.8" fill="none"><path d="M0.5 2H7.5M0.5 5H7.5"/></g><g fill="#d0d0d0"><rect x="4.5" y="0.7" width="1.5" height="2.6"/><rect x="2" y="3.7" width="1.5" height="2.6"/></g></svg>
<svg class="s" style="left:1014.5px;top:138.2px;" width="2" height="6" viewBox="0 0 2 6"><g fill="#d0d0d0"><rect x="0.35" y="0" width="1.3" height="1.3"/><rect x="0.35" y="2.35" width="1.3" height="1.3"/><rect x="0.35" y="4.7" width="1.3" height="1.3"/></g></svg>
<svg class="s" style="left:782px;top:137.8px;" width="8" height="8" viewBox="0 0 8 8"><rect x="1.4" y="1.6" width="5.2" height="4.8" fill="#8e8e8e"/><rect x="0.6" y="0.9" width="6.8" height="6.2" fill="none" stroke="#c8c8c8" stroke-width="0.7"/><g fill="#e8e8e8"><rect x="0" y="0.3" width="1.3" height="1.3"/><rect x="6.7" y="0.3" width="1.3" height="1.3"/><rect x="0" y="6.4" width="1.3" height="1.3"/><rect x="6.7" y="6.4" width="1.3" height="1.3"/></g></svg>
<div class="t" style="left:781px;top:150px;color:#c4c4c4;">Render Mode</div>
<div class="r " style="left:873.2px;top:151px;width:147.3px;height:8.6px;background:#515151;border-radius:1.5px"></div>
<div class="t" style="left:875.2px;top:150px;color:#dcdcdc;">Screen Space - Overlay</div>
<svg class="s" style="left:1013.15px;top:154.2px;" width="4.3" height="2.6" viewBox="0 0 4.3 2.6"><path d="M0 0H4.3L2.15 2.6Z" fill="#d0d0d0"/></svg>
<div class="t" style="left:789.5px;top:161px;color:#c4c4c4;">Pixel Perfect</div>
<div class="r " style="left:872.6px;top:163px;width:7.6px;height:7.6px;background:#272727;border-radius:1px"></div>
<div class="t" style="left:789.5px;top:173px;color:#c4c4c4;">Sort Order</div>
<div class="r " style="left:873.2px;top:173.2px;width:147.8px;height:9.8px;background:#2a2a2a;border-radius:1.5px"></div>
<div class="t" style="left:874.5px;top:174px;color:#dcdcdc;">0</div>
<div class="t" style="left:789.5px;top:184px;color:#c4c4c4;">Target Display</div>
<div class="r " style="left:873.2px;top:185.4px;width:147.3px;height:8.6px;background:#515151;border-radius:1.5px"></div>
<div class="t" style="left:875.2px;top:184px;color:#dcdcdc;">Display 1</div>
<svg class="s" style="left:1013.15px;top:188.6px;" width="4.3" height="2.6" viewBox="0 0 4.3 2.6"><path d="M0 0H4.3L2.15 2.6Z" fill="#d0d0d0"/></svg>
<div class="t" style="left:781px;top:195px;color:#c4c4c4;">Additional Shader Channels</div>
<div class="r " style="left:873.2px;top:196.7px;width:147.3px;height:8.6px;background:#515151;border-radius:1.5px"></div>
<div class="t" style="left:875.2px;top:195px;color:#dcdcdc;">TexCoord1, Normal, Tangent</div>
<svg class="s" style="left:1013.15px;top:199.89999999999998px;" width="4.3" height="2.6" viewBox="0 0 4.3 2.6"><path d="M0 0H4.3L2.15 2.6Z" fill="#d0d0d0"/></svg>
<div class="r " style="left:780.4px;top:207.5px;width:240.3px;height:23.8px;background:#3f3f3f;border-radius:1.5px;box-shadow:inset 0 0 0 0.7px #2a2a2a"></div>
<svg class="s" style="left:783.2px;top:211.20000000000002px;" width="16" height="16" viewBox="0 0 16 16"><path d="M8 1L15.2 14.8H0.8Z" fill="#f6c343" stroke="#f6c343" stroke-width="1" stroke-linejoin="round"/><rect x="7.15" y="5" width="1.7" height="5.6" rx="0.6" fill="#2c2c2c"/><rect x="7.15" y="11.6" width="1.7" height="1.7" rx="0.5" fill="#2c2c2c"/></svg>
<div class="t" style="left:801.3px;top:208px;color:#bcbcbc;font-size:6.5px;">Shader channels Normal and Tangent are most often used with lighting,</div>
<div class="t" style="left:801.3px;top:214px;color:#bcbcbc;font-size:6.5px;">which an Overlay canvas does not support. Its likely these channels are</div>
<div class="t" style="left:801.3px;top:221px;color:#bcbcbc;font-size:6.5px;">not needed.</div>
<div class="t" style="left:781px;top:232px;color:#c4c4c4;width:91.5px;overflow:hidden;white-space:nowrap;">Vertex Color Always In Gamma</div>
<div class="r " style="left:872.6px;top:233.9px;width:7.6px;height:7.6px;background:#272727;border-radius:1px"></div>
<div class="r " style="left:780.4px;top:245px;width:240.3px;height:22.9px;background:#3f3f3f;border-radius:1.5px;box-shadow:inset 0 0 0 0.7px #2a2a2a"></div>
<svg class="s" style="left:783.2px;top:248.25px;" width="16" height="16" viewBox="0 0 16 16"><path d="M8 1L15.2 14.8H0.8Z" fill="#f6c343" stroke="#f6c343" stroke-width="1" stroke-linejoin="round"/><rect x="7.15" y="5" width="1.7" height="5.6" rx="0.6" fill="#2c2c2c"/><rect x="7.15" y="11.6" width="1.7" height="1.7" rx="0.5" fill="#2c2c2c"/></svg>
<div class="t" style="left:801.3px;top:244px;color:#bcbcbc;font-size:6.5px;">Keep vertex color in Gamma space to allow gamma to linear color space</div>
<div class="t" style="left:801.3px;top:251px;color:#bcbcbc;font-size:6.5px;">conversion to happen in UI shaders. This will enhance UI color precision in</div>
<div class="t" style="left:801.3px;top:258px;color:#bcbcbc;font-size:6.5px;">linear color space.</div>
<div class="r " style="left:769.9px;top:274.3px;width:254.1px;height:12.4px;background:#3c3c3c;"></div>
<div class="r " style="left:769.9px;top:273.5px;width:254.1px;height:0.9px;background:#262626;"></div>
<svg class="s" style="left:773.0px;top:279.0px;" width="5" height="3.5" viewBox="0 0 5 3.5"><path d="M0 0H5L2.5 3.5Z" fill="#6a6a6a"/></svg>
<div class="r " style="left:793.3px;top:276.6px;width:7.6px;height:7.6px;background:#272727;border-radius:1px"></div>
<svg class="s" style="left:793.3px;top:276.6px;" width="7.6" height="7.6" viewBox="0 0 7.6 7.6"><path d="M1.7 3.952L3.1919999999999997 5.624L6.08 1.976" fill="none" stroke="#e0e0e0" stroke-width="1"/></svg>
<div class="t" style="left:804.5px;top:275px;color:#e8e8e8;font-size:7.25px;font-weight:bold;">Canvas Scaler</div>
<svg class="s" style="left:989.5px;top:276.6px;" width="7" height="7" viewBox="0 0 7 7"><circle cx="3.5" cy="3.5" r="3.3" fill="#d0d0d0"/><path d="M2.4 2.7a1.1 1.1 0 1 1 1.6 1L3.5 4.2" fill="none" stroke="#3e3e3e" stroke-width="0.9"/><rect x="3" y="4.9" width="1" height="1" fill="#3e3e3e"/></svg>
<svg class="s" style="left:1000.5px;top:276.6px;" width="8" height="7" viewBox="0 0 8 7"><g stroke="#d0d0d0" stroke-width="0.8" fill="none"><path d="M0.5 2H7.5M0.5 5H7.5"/></g><g fill="#d0d0d0"><rect x="4.5" y="0.7" width="1.5" height="2.6"/><rect x="2" y="3.7" width="1.5" height="2.6"/></g></svg>
<svg class="s" style="left:1014.5px;top:277.1px;" width="2" height="6" viewBox="0 0 2 6"><g fill="#d0d0d0"><rect x="0.35" y="0" width="1.3" height="1.3"/><rect x="0.35" y="2.35" width="1.3" height="1.3"/><rect x="0.35" y="4.7" width="1.3" height="1.3"/></g></svg>
<svg class="s" style="left:782px;top:276.6px;" width="8" height="8" viewBox="0 0 8 8"><rect x="0.4" y="0.8" width="7.2" height="6.4" fill="none" stroke="#d0d0d0" stroke-width="0.8"/><rect x="2" y="2.4" width="4" height="3.2" fill="#b0b0b0"/></svg>
<div class="t" style="left:781px;top:288px;color:#c4c4c4;">UI Scale Mode</div>
<div class="r " style="left:873.2px;top:289.7px;width:147.3px;height:8.6px;background:#515151;border-radius:1.5px"></div>
<div class="t" style="left:875.2px;top:288px;color:#dcdcdc;">Constant Pixel Size</div>
<svg class="s" style="left:1013.15px;top:292.9px;" width="4.3" height="2.6" viewBox="0 0 4.3 2.6"><path d="M0 0H4.3L2.15 2.6Z" fill="#d0d0d0"/></svg>
<div class="t" style="left:781px;top:304px;color:#c4c4c4;">Scale Factor</div>
<div class="r " style="left:873.2px;top:304.6px;width:147.8px;height:10.2px;background:#2a2a2a;border-radius:1.5px"></div>
<div class="t" style="left:874.5px;top:306px;color:#dcdcdc;">1</div>
<div class="t" style="left:781px;top:316px;color:#c4c4c4;">Reference Pixels Per Unit</div>
<div class="r " style="left:873.2px;top:316.6px;width:147.8px;height:10.2px;background:#2a2a2a;border-radius:1.5px"></div>
<div class="t" style="left:874.5px;top:317px;color:#dcdcdc;">100</div>
<div class="r " style="left:769.9px;top:331.9px;width:254.1px;height:12.6px;background:#3c3c3c;"></div>
<div class="r " style="left:769.9px;top:331.09999999999997px;width:254.1px;height:0.9px;background:#262626;"></div>
<svg class="s" style="left:773.0px;top:337.0px;" width="5" height="3.5" viewBox="0 0 5 3.5"><path d="M0 0H5L2.5 3.5Z" fill="#6a6a6a"/></svg>
<div class="r " style="left:793.3px;top:334.6px;width:7.6px;height:7.6px;background:#272727;border-radius:1px"></div>
<svg class="s" style="left:793.3px;top:334.6px;" width="7.6" height="7.6" viewBox="0 0 7.6 7.6"><path d="M1.7 3.952L3.1919999999999997 5.624L6.08 1.976" fill="none" stroke="#e0e0e0" stroke-width="1"/></svg>
<div class="t" style="left:804.5px;top:333px;color:#e8e8e8;font-size:7.3px;font-weight:bold;">Graphic Raycaster</div>
<svg class="s" style="left:989.5px;top:334.6px;" width="7" height="7" viewBox="0 0 7 7"><circle cx="3.5" cy="3.5" r="3.3" fill="#d0d0d0"/><path d="M2.4 2.7a1.1 1.1 0 1 1 1.6 1L3.5 4.2" fill="none" stroke="#3e3e3e" stroke-width="0.9"/><rect x="3" y="4.9" width="1" height="1" fill="#3e3e3e"/></svg>
<svg class="s" style="left:1000.5px;top:334.6px;" width="8" height="7" viewBox="0 0 8 7"><g stroke="#d0d0d0" stroke-width="0.8" fill="none"><path d="M0.5 2H7.5M0.5 5H7.5"/></g><g fill="#d0d0d0"><rect x="4.5" y="0.7" width="1.5" height="2.6"/><rect x="2" y="3.7" width="1.5" height="2.6"/></g></svg>
<svg class="s" style="left:1014.5px;top:335.1px;" width="2" height="6" viewBox="0 0 2 6"><g fill="#d0d0d0"><rect x="0.35" y="0" width="1.3" height="1.3"/><rect x="0.35" y="2.35" width="1.3" height="1.3"/><rect x="0.35" y="4.7" width="1.3" height="1.3"/></g></svg>
<svg class="s" style="left:782.5px;top:335px;" width="7" height="7" viewBox="0 0 7 7"><g fill="none" stroke="#b4b4b4" stroke-width="0.7"><rect x="1.5" y="1.5" width="4" height="4"/><path d="M0 1.5H1.5V0M5.5 0V1.5H7M7 5.5H5.5V7M1.5 7V5.5H0"/></g></svg>
<div class="t" style="left:781px;top:346px;color:#7e7e7e;">Script</div>
<div class="r " style="left:873.2px;top:347px;width:147.8px;height:9.4px;background:#333333;border-radius:1.5px"></div>
<div class="t" style="left:882.3px;top:346px;color:#808080;">GraphicRaycaster</div>
<svg class="s" style="left:875px;top:349.2px;" width="5.5" height="5.5" viewBox="0 0 5.5 5.5"><g fill="none" stroke="#7a7a7a" stroke-width="0.6"><rect x="1.2" y="1.2" width="3.1" height="3.1"/><path d="M0 1.2H1.2V0M4.3 0V1.2H5.5M5.5 4.3H4.3V5.5M1.2 5.5V4.3H0"/></g></svg>
<svg class="s" style="left:1011.8px;top:348.2px;" width="7" height="7" viewBox="0 0 7 7"><circle cx="3.5" cy="3.5" r="2.8" fill="none" stroke="#b0b0b0" stroke-width="0.8"/><circle cx="3.5" cy="3.5" r="0.9" fill="#b0b0b0"/></svg>
<div class="t" style="left:781px;top:356px;color:#c4c4c4;">Ignore Reversed Graphics</div>
<div class="r " style="left:872.6px;top:358px;width:7.6px;height:7.6px;background:#272727;border-radius:1px"></div>
<svg class="s" style="left:872.6px;top:358px;" width="7.6" height="7.6" viewBox="0 0 7.6 7.6"><path d="M1.7 3.952L3.1919999999999997 5.624L6.08 1.976" fill="none" stroke="#e0e0e0" stroke-width="1"/></svg>
<div class="t" style="left:781px;top:368px;color:#c4c4c4;">Blocking Objects</div>
<div class="r " style="left:873.2px;top:368.8px;width:147.3px;height:8.6px;background:#515151;border-radius:1.5px"></div>
<div class="t" style="left:875.2px;top:368px;color:#dcdcdc;">None</div>
<svg class="s" style="left:1013.15px;top:372.0px;" width="4.3" height="2.6" viewBox="0 0 4.3 2.6"><path d="M0 0H4.3L2.15 2.6Z" fill="#d0d0d0"/></svg>
<div class="t" style="left:781px;top:379px;color:#c4c4c4;">Blocking Mask</div>
<div class="r " style="left:873.2px;top:380px;width:147.3px;height:8.6px;background:#515151;border-radius:1.5px"></div>
<div class="t" style="left:875.2px;top:379px;color:#dcdcdc;">Everything</div>
<svg class="s" style="left:1013.15px;top:383.2px;" width="4.3" height="2.6" viewBox="0 0 4.3 2.6"><path d="M0 0H4.3L2.15 2.6Z" fill="#d0d0d0"/></svg>
<div class="r " style="left:769.9px;top:394.5px;width:254.1px;height:12.2px;background:#3c3c3c;"></div>
<div class="r " style="left:769.9px;top:393.7px;width:254.1px;height:0.9px;background:#262626;"></div>
<svg class="s" style="left:773.0px;top:398.9px;" width="5" height="3.5" viewBox="0 0 5 3.5"><path d="M0 0H5L2.5 3.5Z" fill="#6a6a6a"/></svg>
<div class="r " style="left:793.3px;top:396.5px;width:7.6px;height:7.6px;background:#272727;border-radius:1px"></div>
<svg class="s" style="left:793.3px;top:396.5px;" width="7.6" height="7.6" viewBox="0 0 7.6 7.6"><path d="M1.7 3.952L3.1919999999999997 5.624L6.08 1.976" fill="none" stroke="#e0e0e0" stroke-width="1"/></svg>
<div class="t" style="left:804.5px;top:395px;color:#e8e8e8;font-size:7.45px;font-weight:bold;">Scene Fader (Script)</div>
<svg class="s" style="left:989.5px;top:396.5px;" width="7" height="7" viewBox="0 0 7 7"><circle cx="3.5" cy="3.5" r="3.3" fill="#d0d0d0"/><path d="M2.4 2.7a1.1 1.1 0 1 1 1.6 1L3.5 4.2" fill="none" stroke="#3e3e3e" stroke-width="0.9"/><rect x="3" y="4.9" width="1" height="1" fill="#3e3e3e"/></svg>
<svg class="s" style="left:1000.5px;top:396.5px;" width="8" height="7" viewBox="0 0 8 7"><g stroke="#d0d0d0" stroke-width="0.8" fill="none"><path d="M0.5 2H7.5M0.5 5H7.5"/></g><g fill="#d0d0d0"><rect x="4.5" y="0.7" width="1.5" height="2.6"/><rect x="2" y="3.7" width="1.5" height="2.6"/></g></svg>
<svg class="s" style="left:1014.5px;top:397.0px;" width="2" height="6" viewBox="0 0 2 6"><g fill="#d0d0d0"><rect x="0.35" y="0" width="1.3" height="1.3"/><rect x="0.35" y="2.35" width="1.3" height="1.3"/><rect x="0.35" y="4.7" width="1.3" height="1.3"/></g></svg>
<svg class="s" style="left:782.5px;top:396px;" width="7" height="8.4" viewBox="0 0 7 8.4"><path d="M0.5 0.4H4.6L6.5 2.3V8H0.5Z" fill="#e4e4e4"/><path d="M2 5.8L3.6 3.4L5 5.8Z" fill="#49a06a"/><rect x="2.2" y="5.6" width="2.6" height="1.2" fill="#49a06a"/></svg>
<div class="t" style="left:781px;top:408px;color:#7e7e7e;">Script</div>
<div class="r " style="left:873.2px;top:408.8px;width:147.8px;height:9.4px;background:#333333;border-radius:1.5px"></div>
<div class="t" style="left:882.3px;top:408px;color:#808080;">SceneFader</div>
<svg class="s" style="left:875.5px;top:410.6px;" width="4.6" height="6" viewBox="0 0 4.6 6"><path d="M0.3 0.3H3L4.3 1.6V5.7H0.3Z" fill="#8a8a8a"/><rect x="1.2" y="2.8" width="2.2" height="1.8" fill="#4a7a5a"/></svg>
<svg class="s" style="left:1011.8px;top:410.0px;" width="7" height="7" viewBox="0 0 7 7"><circle cx="3.5" cy="3.5" r="2.8" fill="none" stroke="#b0b0b0" stroke-width="0.8"/><circle cx="3.5" cy="3.5" r="0.9" fill="#b0b0b0"/></svg>
<div class="t" style="left:781px;top:419px;color:#c4c4c4;">Fade Canvas Group</div>
<div class="r " style="left:873.2px;top:420.2px;width:147.8px;height:9.6px;background:#2a2a2a;border-radius:1.5px"></div>
<div class="t" style="left:882.3px;top:419px;color:#dcdcdc;">FadePanel (Canvas Group)</div>
<svg class="s" style="left:875px;top:422.6px;" width="5.6" height="5.6" viewBox="0 0 5.6 5.6"><g fill="#e0e0e0"><rect x="0" y="0" width="2.4" height="2.4"/><rect x="3.2" y="0" width="2.4" height="2.4"/><rect x="0" y="3.2" width="2.4" height="2.4"/><rect x="3.2" y="3.2" width="2.4" height="2.4"/></g></svg>
<div class="r " style="left:1010px;top:420.2px;width:10.7px;height:9.6px;background:#303030;border-radius:0 1.5px 1.5px 0"></div>
<svg class="s" style="left:1011.8px;top:421.5px;" width="7" height="7" viewBox="0 0 7 7"><circle cx="3.5" cy="3.5" r="2.8" fill="none" stroke="#b0b0b0" stroke-width="0.8"/><circle cx="3.5" cy="3.5" r="0.9" fill="#b0b0b0"/></svg>
<div class="r " style="left:769.9px;top:431px;width:0.9px;height:10.6px;background:#3a8ee6;"></div>
<div class="t" style="left:781px;top:431px;color:#ececec;font-size:7.3px;font-weight:bold;">Fade Duration</div>
<div class="r " style="left:873.2px;top:431.6px;width:147.8px;height:9.6px;background:#2a2a2a;border-radius:1.5px"></div>
<div class="t" style="left:874.5px;top:431px;color:#ececec;font-size:7.3px;font-weight:bold;">3</div>
<div class="r " style="left:769.9px;top:445.4px;width:254.1px;height:0.9px;background:#262626;"></div>
<div class="r " style="left:831.2px;top:451.3px;width:130.6px;height:11.8px;background:#585858;border-radius:1.5px"></div>
<div class="t" style="left:831.2px;top:452px;color:#e4e4e4;width:130.6px;text-align:center;">Add Component</div>
<div class="t" style="left:2.5px;top:360px;color:#c6c6c6;">Physics Debug</div>
<div class="t" style="left:58.3px;top:360px;color:#c6c6c6;">Build Profiles</div>
<svg class="s" style="left:109.5px;top:362px;" width="7" height="7" viewBox="0 0 7 7"><rect x="0" y="0" width="7" height="2.2" fill="#c4c4c4"/><path d="M0.6 2.8H6.4V7H0.6Z" fill="#c4c4c4"/><rect x="2.3" y="3.8" width="2.4" height="0.9" fill="#111"/></svg>
<div class="t" style="left:118.8px;top:360px;color:#c6c6c6;">Package Manager</div>
<div class="t" style="left:188.3px;top:360px;color:#c6c6c6;">Unity Version Control</div>
<div class="r " style="left:259.7px;top:358px;width:47px;height:14px;background:#3c3c3c;border-radius:2px 2px 0 0"></div>
<svg class="s" style="left:265.5px;top:362px;" width="7.5" height="6.5" viewBox="0 0 7.5 6.5"><path d="M0.3 0.5H2.8L3.6 1.5H7.2V6.2H0.3Z" fill="#d0d0d0"/></svg>
<div class="t" style="left:275.6px;top:360px;color:#c6c6c6;">Project</div>
<svg class="s" style="left:487.5px;top:361.7px;" width="5.4" height="6.4" viewBox="0 0 5.4 6.4"><g fill="none" stroke="#c4c4c4" stroke-width="0.85"><rect x="0.5" y="3" width="4.4" height="2.9"/><path d="M1.4 3V1.9a1.35 1.35 0 0 1 2.7 0"/></g></svg>
<svg class="s" style="left:499.3px;top:362.4px;" width="2" height="6" viewBox="0 0 2 6"><g fill="#c4c4c4"><rect x="0.35" y="0" width="1.3" height="1.3"/><rect x="0.35" y="2.35" width="1.3" height="1.3"/><rect x="0.35" y="4.7" width="1.3" height="1.3"/></g></svg>
<div class="r " style="left:508.7px;top:358px;width:48.4px;height:14px;background:#3c3c3c;border-radius:2px 2px 0 0"></div>
<svg class="s" style="left:514.5px;top:362.3px;" width="6.4" height="6.4" viewBox="0 0 6.4 6.4"><rect x="0.3" y="0.3" width="5.8" height="5.8" fill="#c4c4c4"/><g fill="#3c3c3c"><rect x="1.2" y="1.4" width="1.4" height="0.9"/><rect x="3.2" y="1.4" width="2" height="0.9"/><rect x="1.2" y="3" width="4" height="0.9"/></g></svg>
<div class="t" style="left:523.8px;top:360px;color:#c6c6c6;">Console</div>
<svg class="s" style="left:760.3px;top:362.4px;" width="2" height="6" viewBox="0 0 2 6"><g fill="#c4c4c4"><rect x="0.35" y="0" width="1.3" height="1.3"/><rect x="0.35" y="2.35" width="1.3" height="1.3"/><rect x="0.35" y="4.7" width="1.3" height="1.3"/></g></svg>
<div class="r " style="left:0px;top:372px;width:508px;height:11.5px;background:#3c3c3c;"></div>
<div class="r " style="left:0px;top:383.3px;width:508px;height:0.7px;background:#2c2c2c;"></div>
<svg class="s" style="left:2px;top:374px;" width="7.4" height="7.4" viewBox="0 0 7.4 7.4"><path d="M3.7 0V7.4M0 3.7H7.4" stroke="#d0d0d0" stroke-width="1"/></svg>
<svg class="s" style="left:11.35px;top:376.3px;" width="4.3" height="2.6" viewBox="0 0 4.3 2.6"><path d="M0 0H4.3L2.15 2.6Z" fill="#c4c4c4"/></svg>
<div class="r " style="left:240.8px;top:373.5px;width:172.5px;height:8.6px;background:#2a2a2a;border-radius:1.5px"></div>
<svg class="s" style="left:243.5px;top:375.6px;" width="5" height="5" viewBox="0 0 5 5"><g fill="none" stroke="#b0b0b0" stroke-width="0.9"><circle cx="2" cy="2" r="1.5"/><path d="M3.2 3.2L4.8 4.8"/></g></svg>
<div class="r " style="left:425.5px;top:372.5px;width:0.7px;height:11px;background:#303030;"></div>
<div class="r " style="left:439.8px;top:372.5px;width:0.7px;height:11px;background:#303030;"></div>
<div class="r " style="left:454.3px;top:372.5px;width:0.7px;height:11px;background:#303030;"></div>
<div class="r " style="left:469.3px;top:372.5px;width:0.7px;height:11px;background:#303030;"></div>
<div class="r " style="left:484px;top:372.5px;width:0.7px;height:11px;background:#303030;"></div>
<svg class="s" style="left:414.5px;top:374px;" width="8" height="8" viewBox="0 0 8 8"><g fill="none" stroke="#c4c4c4" stroke-width="0.8"><rect x="2.6" y="0.5" width="4.8" height="4.8"/><rect x="0.5" y="3.8" width="3.2" height="3.2" fill="#3c3c3c"/></g></svg>
<svg class="s" style="left:428.5px;top:373.6px;" width="8" height="8" viewBox="0 0 8 8"><g fill="#d0d0d0"><circle cx="3.4" cy="2.2" r="1.9"/><rect x="1.4" y="4.4" width="3.6" height="3.4"/><path d="M5.6 6.6L6.7 3.2L8 6.6Z"/></g></svg>
<svg class="s" style="left:443px;top:374.2px;" width="8" height="7" viewBox="0 0 8 7"><path d="M3.6 0.6H7.2V4L3.6 6.6L0.6 3.6Z" fill="#d0d0d0"/><circle cx="5.7" cy="2.1" r="0.7" fill="#3c3c3c"/></svg>
<svg class="s" style="left:457.8px;top:373.7px;" width="8" height="8" viewBox="0 0 8 8"><circle cx="4" cy="4" r="3.7" fill="#e0e0e0"/><rect x="3.4" y="1.6" width="1.2" height="3.2" fill="#3c3c3c"/><rect x="3.4" y="5.4" width="1.2" height="1.2" fill="#3c3c3c"/></svg>
<svg class="s" style="left:473px;top:374px;" width="7.4" height="7" viewBox="0 0 7.4 7"><path d="M3.7 0.2L4.7 2.6L7.3 2.8L5.3 4.5L5.9 7L3.7 5.6L1.5 7L2.1 4.5L0.1 2.8L2.7 2.6Z" fill="#8a8a8a"/></svg>
<div class="r " style="left:484.7px;top:372.3px;width:22.3px;height:11px;background:#4f4f4f;"></div>
<svg class="s" style="left:487px;top:374.3px;" width="9" height="7" viewBox="0 0 9 7"><path d="M0.3 3.5Q4.5 -0.5 8.7 3.5Q4.5 7.5 0.3 3.5Z" fill="none" stroke="#d0d0d0" stroke-width="0.8"/><circle cx="4.5" cy="3.5" r="1.2" fill="#d0d0d0"/><path d="M1 6.6L8 0.4" stroke="#d0d0d0" stroke-width="0.9"/></svg>
<div class="t" style="left:496.8px;top:372px;color:#c6c6c6;">22</div>
<div class="r " style="left:138.7px;top:384px;width:0.9px;height:217px;background:#2e2e2e;"></div>
<div class="r " style="left:139.6px;top:384px;width:367.9px;height:11.5px;background:#3c3c3c;"></div>
<div class="r " style="left:139.6px;top:395.5px;width:367.9px;height:194px;background:#333333;"></div>
<div class="r " style="left:139.6px;top:589.5px;width:367.9px;height:11.7px;background:#3f3f3f;"></div>
<div class="r " style="left:472px;top:595px;width:26px;height:0.8px;background:#7a7a7a;"></div>
<svg class="s" style="left:466.3px;top:592.3px;" width="6" height="6" viewBox="0 0 6 6"><circle cx="3" cy="3" r="2.9" fill="#b8b8b8"/></svg>
<svg class="s" style="left:0.20000000000000018px;top:387.2px;" width="5" height="3.5" viewBox="0 0 5 3.5"><path d="M0 0H5L2.5 3.5Z" fill="#6a6a6a"/></svg>
<svg class="s" style="left:8.6px;top:385.2px;" width="7" height="6.8" viewBox="0 0 7 6.8"><path d="M3.5 0.1L4.5 2.4L7 2.6L5.1 4.3L5.7 6.7L3.5 5.4L1.3 6.7L1.9 4.3L0 2.6L2.5 2.4Z" fill="#d8d8d8"/></svg>
<div class="t" style="left:18.2px;top:383px;color:#e8e8e8;font-size:7.3px;font-weight:bold;">Favorites</div>
<svg class="s" style="left:16px;top:394.3px;" width="7.4" height="7.4" viewBox="0 0 7.4 7.4"><g fill="none" stroke="#c4c4c4" stroke-width="0.8"><circle cx="2.9" cy="2.9" r="2.3"/><path d="M4.6 4.6L7 7"/></g></svg>
<div class="t" style="left:25.7px;top:393px;color:#c6c6c6;">All Materials</div>
<svg class="s" style="left:16px;top:403.55px;" width="7.4" height="7.4" viewBox="0 0 7.4 7.4"><g fill="none" stroke="#c4c4c4" stroke-width="0.8"><circle cx="2.9" cy="2.9" r="2.3"/><path d="M4.6 4.6L7 7"/></g></svg>
<div class="t" style="left:25.7px;top:402px;color:#c6c6c6;">All Models</div>
<svg class="s" style="left:16px;top:412.8px;" width="7.4" height="7.4" viewBox="0 0 7.4 7.4"><g fill="none" stroke="#c4c4c4" stroke-width="0.8"><circle cx="2.9" cy="2.9" r="2.3"/><path d="M4.6 4.6L7 7"/></g></svg>
<div class="t" style="left:25.7px;top:411px;color:#c6c6c6;">All Prefabs</div>
<div class="r " style="left:0px;top:457px;width:138.7px;height:9px;background:#4d4d4d;"></div>
<svg class="s" style="left:0.20000000000000018px;top:432.5px;" width="5" height="3.5" viewBox="0 0 5 3.5"><path d="M0 0H5L2.5 3.5Z" fill="#6a6a6a"/></svg>
<svg class="s" style="left:8.2px;top:430.7px;" width="8" height="6.4" viewBox="0 0 8 6.4"><path d="M0.3 0.4H2.9L3.7 1.4H6.6V2.6H1.8L0.3 6Z" fill="#d8d8d8"/><path d="M2 3H7.8L6.4 6.1H0.5Z" fill="#d8d8d8"/></svg>
<div class="t" style="left:18.2px;top:429px;color:#e8e8e8;font-size:7.3px;font-weight:bold;">Assets</div>
<svg class="s" style="left:8.7px;top:440.6px;" width="3.5" height="5" viewBox="0 0 3.5 5"><path d="M0 0L3.5 2.5L0 5Z" fill="#6a6a6a"/></svg>
<svg class="s" style="left:16px;top:439.8px;" width="7.4" height="6.4" viewBox="0 0 7.4 6.4"><path d="M0.3 0.4H2.9L3.7 1.4H7.1V6.1H0.3Z" fill="#d0d0d0"/></svg>
<div class="t" style="left:25.7px;top:438px;color:#c6c6c6;">Plugins</div>
<svg class="s" style="left:16px;top:449.02000000000004px;" width="7.4" height="6.4" viewBox="0 0 7.4 6.4"><path d="M0.3 0.4H2.9L3.7 1.4H7.1V6.1H0.3Z" fill="#d0d0d0"/></svg>
<div class="t" style="left:25.7px;top:447px;color:#c6c6c6;">Resources</div>
<svg class="s" style="left:16px;top:458.24px;" width="7.4" height="6.4" viewBox="0 0 7.4 6.4"><path d="M0.3 0.4H2.9L3.7 1.4H7.1V6.1H0.3Z" fill="#d0d0d0"/></svg>
<div class="t" style="left:25.7px;top:456px;color:#c6c6c6;">Scenes</div>
<svg class="s" style="left:16px;top:467.46000000000004px;" width="7.4" height="6.4" viewBox="0 0 7.4 6.4"><path d="M0.3 0.4H2.9L3.7 1.4H7.1V6.1H0.3Z" fill="#d0d0d0"/></svg>
<div class="t" style="left:25.7px;top:465px;color:#c6c6c6;">Settings</div>
<svg class="s" style="left:8.7px;top:477.48px;" width="3.5" height="5" viewBox="0 0 3.5 5"><path d="M0 0L3.5 2.5L0 5Z" fill="#6a6a6a"/></svg>
<svg class="s" style="left:16px;top:476.68px;" width="7.4" height="6.4" viewBox="0 0 7.4 6.4"><path d="M0.3 0.4H2.9L3.7 1.4H7.1V6.1H0.3Z" fill="#d0d0d0"/></svg>
<div class="t" style="left:25.7px;top:474px;color:#c6c6c6;">TextMesh Pro</div>
<svg class="s" style="left:8.7px;top:486.70000000000005px;" width="3.5" height="5" viewBox="0 0 3.5 5"><path d="M0 0L3.5 2.5L0 5Z" fill="#6a6a6a"/></svg>
<svg class="s" style="left:16px;top:485.90000000000003px;" width="7.4" height="6.4" viewBox="0 0 7.4 6.4"><path d="M0.3 0.4H2.9L3.7 1.4H7.1V6.1H0.3Z" fill="#d0d0d0"/></svg>
<div class="t" style="left:25.7px;top:484px;color:#c6c6c6;">TutorialInfo</div>
<svg class="s" style="left:8.2px;top:495.0px;" width="7.4" height="6.4" viewBox="0 0 7.4 6.4"><path d="M0.3 0.4H2.9L3.7 1.4H7.1V6.1H0.3Z" fill="#d8d8d8"/></svg>
<div class="t" style="left:18.2px;top:493px;color:#e8e8e8;font-size:7.3px;font-weight:bold;">Packages</div>
<div class="t" style="left:141.2px;top:384px;color:#9a9a9a;">Assets</div>
<svg class="s" style="left:166px;top:387px;" width="3.5" height="5" viewBox="0 0 3.5 5"><path d="M0.5 0.3L3 2.5L0.5 4.7" fill="none" stroke="#9a9a9a" stroke-width="0.8"/></svg>
<div class="t" style="left:172.5px;top:384px;color:#e0e0e0;font-size:7.3px;font-weight:bold;">Scenes</div>
<svg class="s" style="left:149px;top:396.5px;" width="8.4" height="8.4" viewBox="0 0 8.4 8.4"><circle cx="4.2" cy="4.2" r="3.9" fill="#e0e0e0"/><g fill="#333333"><path d="M3.6 3.5L1.9 2.6L3.6 1.3Z"/><path d="M4.8 3.5L6.5 2.6L4.8 1.3Z"/><path d="M1.3 3.6L3 4.5L1.6 6Z"/><path d="M7.1 3.6L5.4 4.5L6.8 6Z"/><path d="M4.2 5.2L5.8 6.3L4.2 7.4L2.6 6.3Z"/></g></svg>
<div class="t" style="left:159px;top:395px;color:#c6c6c6;">GameScene</div>
<svg class="s" style="left:149px;top:405.8px;" width="8.4" height="8.4" viewBox="0 0 8.4 8.4"><circle cx="4.2" cy="4.2" r="3.9" fill="#e0e0e0"/><g fill="#333333"><path d="M3.6 3.5L1.9 2.6L3.6 1.3Z"/><path d="M4.8 3.5L6.5 2.6L4.8 1.3Z"/><path d="M1.3 3.6L3 4.5L1.6 6Z"/><path d="M7.1 3.6L5.4 4.5L6.8 6Z"/><path d="M4.2 5.2L5.8 6.3L4.2 7.4L2.6 6.3Z"/></g></svg>
<div class="t" style="left:159px;top:405px;color:#c6c6c6;">TitleMenu</div>
<div class="r " style="left:508.7px;top:372px;width:260px;height:11.5px;background:#3c3c3c;"></div>
<div class="r " style="left:508.7px;top:383.3px;width:260px;height:0.7px;background:#2c2c2c;"></div>
<div class="r " style="left:508.7px;top:535.5px;width:260px;height:0.8px;background:#323232;"></div>
<div class="t" style="left:510.6px;top:372px;color:#c6c6c6;">Clear</div>
<div class="r " style="left:530.5px;top:372.5px;width:0.7px;height:11px;background:#303030;"></div>
<svg class="s" style="left:533.15px;top:376.3px;" width="4.3" height="2.6" viewBox="0 0 4.3 2.6"><path d="M0 0H4.3L2.15 2.6Z" fill="#c4c4c4"/></svg>
<div class="r " style="left:540.5px;top:372.5px;width:0.7px;height:11px;background:#303030;"></div>
<div class="t" style="left:543.8px;top:372px;color:#c6c6c6;">Collapse</div>
<div class="r " style="left:573px;top:372.5px;width:0.7px;height:11px;background:#303030;"></div>
<div class="t" style="left:576.3px;top:372px;color:#c6c6c6;">Error Pause</div>
<div class="r " style="left:615px;top:372.5px;width:0.7px;height:11px;background:#303030;"></div>
<div class="t" style="left:617.8px;top:372px;color:#c6c6c6;">Editor</div>
<svg class="s" style="left:638.65px;top:376.3px;" width="4.3" height="2.6" viewBox="0 0 4.3 2.6"><path d="M0 0H4.3L2.15 2.6Z" fill="#c4c4c4"/></svg>
<div class="r " style="left:646.2px;top:373.5px;width:65px;height:8.6px;background:#2a2a2a;border-radius:1.5px"></div>
<svg class="s" style="left:648.8px;top:375.6px;" width="5" height="5" viewBox="0 0 5 5"><g fill="none" stroke="#b0b0b0" stroke-width="0.9"><circle cx="2" cy="2" r="1.5"/><path d="M3.2 3.2L4.8 4.8"/></g></svg>
<div class="r " style="left:712px;top:372.3px;width:18.3px;height:11px;background:#4a4a4a;"></div>
<div class="r " style="left:731.3px;top:372.3px;width:18px;height:11px;background:#4a4a4a;"></div>
<div class="r " style="left:750.3px;top:372.3px;width:18.5px;height:11px;background:#4a4a4a;"></div>
<svg class="s" style="left:714.5px;top:373.8px;" width="8" height="8" viewBox="0 0 8 8"><circle cx="3.8" cy="3.6" r="3.5" fill="#e8e8e8"/><path d="M5 6L7.6 7.6L6.4 4.8Z" fill="#e8e8e8"/><rect x="3.2" y="1.4" width="1.2" height="3" fill="#4a4a4a"/><rect x="3.2" y="5" width="1.2" height="1.1" fill="#4a4a4a"/></svg>
<div class="t" style="left:723.8px;top:372px;color:#a0a0a0;">0</div>
<svg class="s" style="left:733.5px;top:373.8px;" width="8" height="7.6" viewBox="0 0 8 7.6"><path d="M4 0.4L7.7 7.2H0.3Z" fill="#e8e8e8"/><rect x="3.4" y="2.6" width="1.2" height="2.6" fill="#4a4a4a"/><rect x="3.4" y="5.6" width="1.2" height="1" fill="#4a4a4a"/></svg>
<div class="t" style="left:743.8px;top:372px;color:#a0a0a0;">0</div>
<svg class="s" style="left:752.5px;top:373.8px;" width="8" height="8" viewBox="0 0 8 8"><circle cx="4" cy="3.8" r="3.6" fill="#e8e8e8"/><rect x="3.4" y="1.5" width="1.2" height="3" fill="#4a4a4a"/><rect x="3.4" y="5.1" width="1.2" height="1.1" fill="#4a4a4a"/></svg>
<div class="t" style="left:761.8px;top:372px;color:#a0a0a0;">0</div>
<div class="r " style="left:977px;top:603px;width:0.7px;height:9px;background:#2a2a2a;"></div>
<div class="r " style="left:992.5px;top:603px;width:0.7px;height:9px;background:#2a2a2a;"></div>
<div class="r " style="left:1007.5px;top:603px;width:0.7px;height:9px;background:#2a2a2a;"></div>
<svg class="s" style="left:980.3px;top:603.6px;" width="9" height="9" viewBox="0 0 9 9"><path d="M4.5 0.2L5.6 2.2L7.8 1.4L7.2 3.6L8.8 5.2L6.8 5.8L6.4 9H2.8L3 5.8L0.4 6L1.8 4.2L0.6 2.2L2.8 2.6Z" fill="#e8b22a"/></svg>
<svg class="s" style="left:996.6px;top:603.6px;" width="8" height="9" viewBox="0 0 8 9"><g fill="#d8d8d8"><ellipse cx="4" cy="1.8" rx="3.4" ry="1.6"/><path d="M0.6 2.8Q4 5 7.4 2.8V4.8Q4 7 0.6 4.8Z"/><path d="M0.6 5.6Q4 7.8 7.4 5.6V7.6Q4 9.6 0.6 7.6Z"/></g></svg>
<svg class="s" style="left:1011.2px;top:603.4px;" width="9" height="9" viewBox="0 0 9 9"><circle cx="4.5" cy="4.5" r="3.9" fill="none" stroke="#c8c8c8" stroke-width="0.8"/><path d="M2.9 4.6L4.1 5.8L6.3 3.3" fill="none" stroke="#e0e0e0" stroke-width="1"/></svg>
<div class="r " style="left:1022.7px;top:0px;width:1.3px;height:612px;background:rgba(120,136,165,0.85);"></div>
</div>
</body></html>
